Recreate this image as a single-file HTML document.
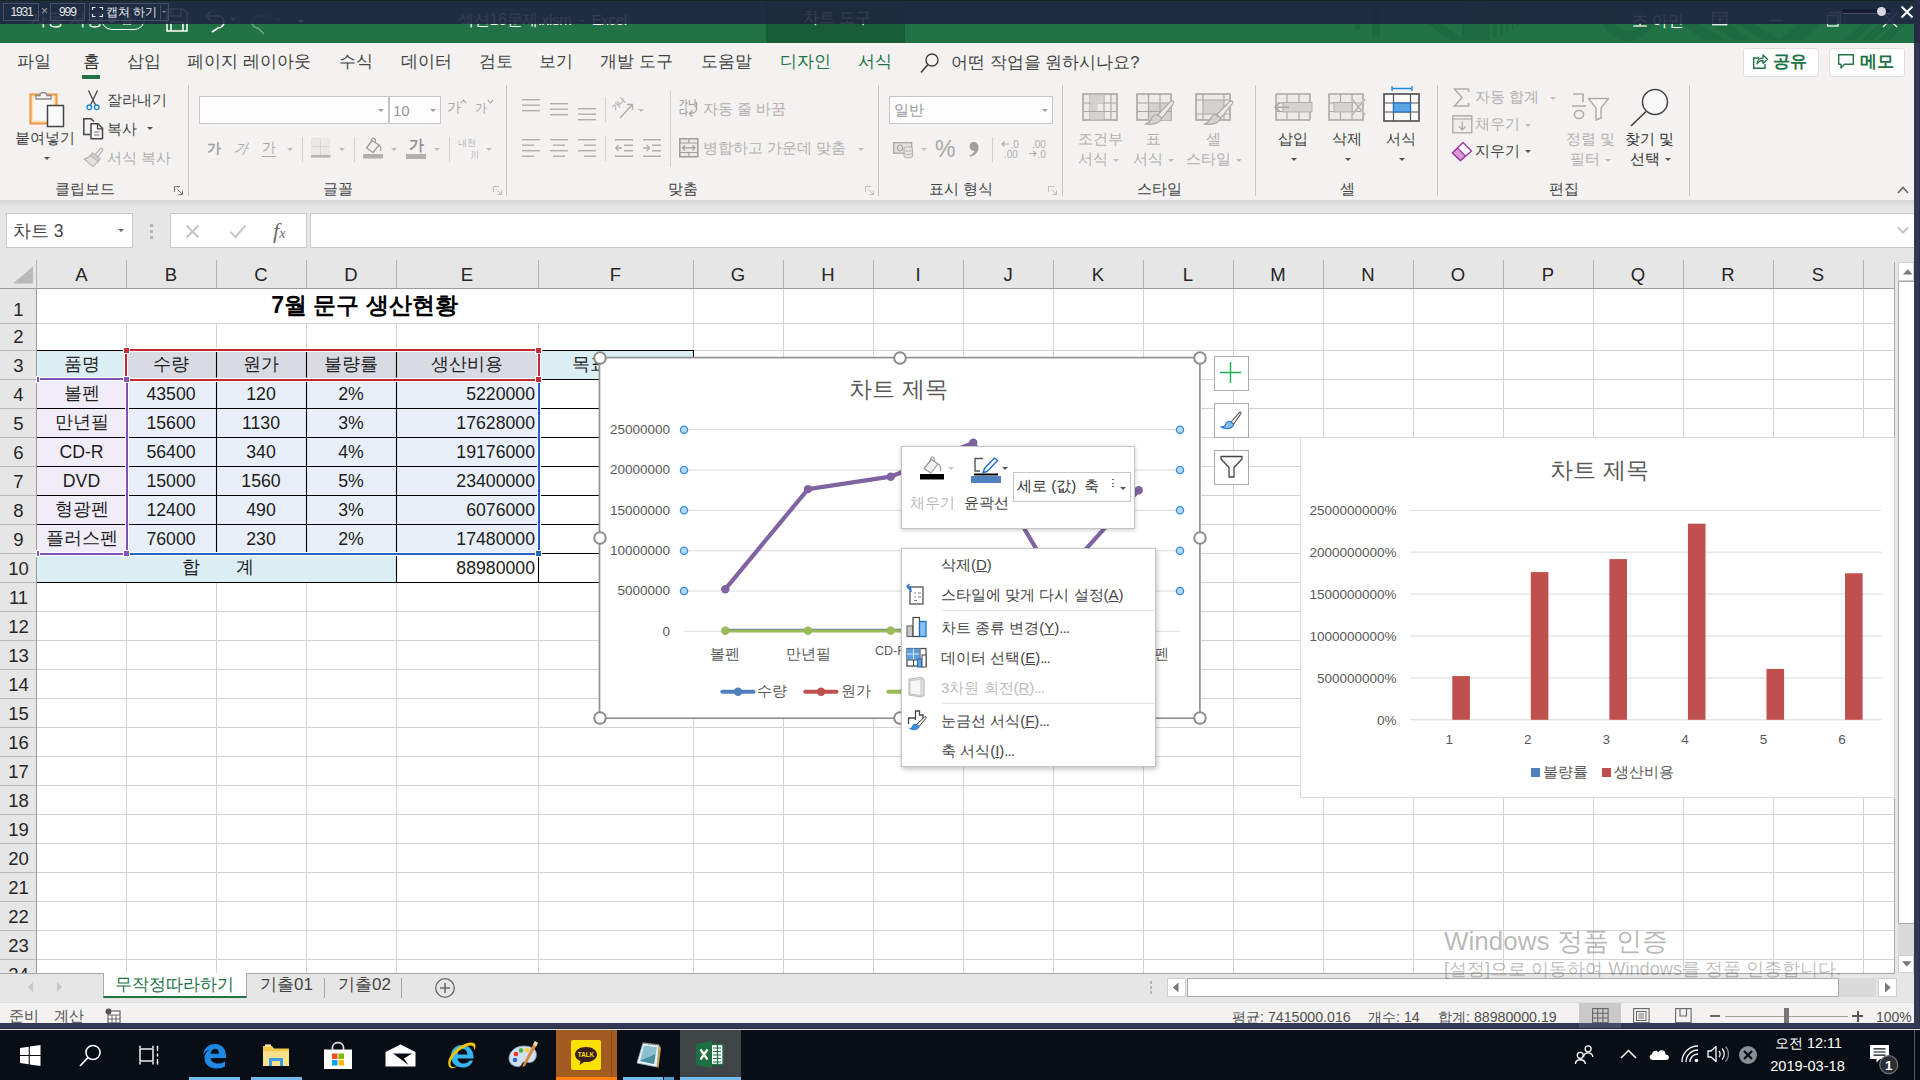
<!DOCTYPE html>
<html><head><meta charset="utf-8"><title>Excel</title>
<style>
html,body{margin:0;padding:0;overflow:hidden;}html{width:1920px;height:1080px;}
body{width:1920px;height:1080px;overflow:hidden;position:relative;background:#e6e6e6;font-family:"Liberation Sans",sans-serif;}
.b{position:absolute;box-sizing:border-box;}
.t{position:absolute;white-space:nowrap;font-family:"Liberation Sans",sans-serif;}
svg{position:absolute;overflow:visible;}
</style></head><body>

<div class="b" style="left:6px;top:213px;width:127px;height:35px;background:#fff;border:1px solid #c9c9c9;"></div>
<div class="t " style="left:13px;top:220.0px;font-size:17.5px;line-height:23px;color:#444;">차트 3</div>
<div class="b" style="left:117.5px;top:229.2px;width:0;height:0;border-left:3.5px solid transparent;border-right:3.5px solid transparent;border-top:3.5px solid #666;"></div>
<div class="b" style="left:150px;top:224px;width:3px;height:3px;background:#b5b5b5;"></div>
<div class="b" style="left:150px;top:230px;width:3px;height:3px;background:#b5b5b5;"></div>
<div class="b" style="left:150px;top:236px;width:3px;height:3px;background:#b5b5b5;"></div>
<div class="b" style="left:170px;top:213px;width:137px;height:35px;background:#fff;border:1px solid #c9c9c9;"></div>
<svg class="b" style="left:185px;top:224px;" width="15" height="15" viewBox="0 0 15 15"><path d="M1.5 1.5 L13.5 13.5 M13.5 1.5 L1.5 13.5" stroke="#c2c2c2" stroke-width="1.8"/></svg>
<svg class="b" style="left:229px;top:224px;" width="18" height="15" viewBox="0 0 18 15"><path d="M1.5 8 L6.5 13 L16.5 1.5" fill="none" stroke="#c8c8c8" stroke-width="2.2"/></svg>
<div class="t " style="left:273px;top:215.5px;font-size:22px;line-height:29px;color:#6a6a6a;font-family:'Liberation Serif',serif;"><i>f</i><span style="font-size:14px"><i>x</i></span></div>
<div class="b" style="left:310px;top:213px;width:1604px;height:35px;background:#fff;border:1px solid #c9c9c9;border-right:none;"></div>
<svg class="b" style="left:1897px;top:226px;" width="12" height="8" viewBox="0 0 12 8"><path d="M1 1.5 L6 6.5 L11 1.5" fill="none" stroke="#c4c4c4" stroke-width="2"/></svg>
<div class="b" style="left:0px;top:262px;width:1895px;height:27px;background:#e6e6e6;"></div>
<div class="b" style="left:0px;top:288px;width:1895px;height:1px;background:#9b9b9b;"></div>
<div class="b" style="left:0px;top:289px;width:37px;height:684px;background:#e6e6e6;"></div>
<div class="b" style="left:36px;top:289px;width:1px;height:684px;background:#9b9b9b;"></div>
<svg class="b" style="left:12px;top:266px;" width="22" height="18" viewBox="0 0 22 18"><polygon points="21,0.5 21,17.5 1,17.5" fill="#b9b9b9"/></svg>
<div class="b" style="left:36px;top:260px;width:1px;height:28px;background:#b3b3b3;"></div>
<div class="t " style="left:-68.5px;width:300px;text-align:center;top:263.0px;font-size:18.5px;line-height:24px;color:#262626;">A</div>
<div class="b" style="left:126px;top:260px;width:1px;height:28px;background:#b3b3b3;"></div>
<div class="t " style="left:21.0px;width:300px;text-align:center;top:263.0px;font-size:18.5px;line-height:24px;color:#262626;">B</div>
<div class="b" style="left:216px;top:260px;width:1px;height:28px;background:#b3b3b3;"></div>
<div class="t " style="left:111.0px;width:300px;text-align:center;top:263.0px;font-size:18.5px;line-height:24px;color:#262626;">C</div>
<div class="b" style="left:306px;top:260px;width:1px;height:28px;background:#b3b3b3;"></div>
<div class="t " style="left:201.0px;width:300px;text-align:center;top:263.0px;font-size:18.5px;line-height:24px;color:#262626;">D</div>
<div class="b" style="left:396px;top:260px;width:1px;height:28px;background:#b3b3b3;"></div>
<div class="t " style="left:317.0px;width:300px;text-align:center;top:263.0px;font-size:18.5px;line-height:24px;color:#262626;">E</div>
<div class="b" style="left:538px;top:260px;width:1px;height:28px;background:#b3b3b3;"></div>
<div class="t " style="left:465.5px;width:300px;text-align:center;top:263.0px;font-size:18.5px;line-height:24px;color:#262626;">F</div>
<div class="b" style="left:693px;top:260px;width:1px;height:28px;background:#b3b3b3;"></div>
<div class="t " style="left:588.0px;width:300px;text-align:center;top:263.0px;font-size:18.5px;line-height:24px;color:#262626;">G</div>
<div class="b" style="left:783px;top:260px;width:1px;height:28px;background:#b3b3b3;"></div>
<div class="t " style="left:678.0px;width:300px;text-align:center;top:263.0px;font-size:18.5px;line-height:24px;color:#262626;">H</div>
<div class="b" style="left:873px;top:260px;width:1px;height:28px;background:#b3b3b3;"></div>
<div class="t " style="left:768.0px;width:300px;text-align:center;top:263.0px;font-size:18.5px;line-height:24px;color:#262626;">I</div>
<div class="b" style="left:963px;top:260px;width:1px;height:28px;background:#b3b3b3;"></div>
<div class="t " style="left:858.0px;width:300px;text-align:center;top:263.0px;font-size:18.5px;line-height:24px;color:#262626;">J</div>
<div class="b" style="left:1053px;top:260px;width:1px;height:28px;background:#b3b3b3;"></div>
<div class="t " style="left:948.0px;width:300px;text-align:center;top:263.0px;font-size:18.5px;line-height:24px;color:#262626;">K</div>
<div class="b" style="left:1143px;top:260px;width:1px;height:28px;background:#b3b3b3;"></div>
<div class="t " style="left:1038.0px;width:300px;text-align:center;top:263.0px;font-size:18.5px;line-height:24px;color:#262626;">L</div>
<div class="b" style="left:1233px;top:260px;width:1px;height:28px;background:#b3b3b3;"></div>
<div class="t " style="left:1128.0px;width:300px;text-align:center;top:263.0px;font-size:18.5px;line-height:24px;color:#262626;">M</div>
<div class="b" style="left:1323px;top:260px;width:1px;height:28px;background:#b3b3b3;"></div>
<div class="t " style="left:1218.0px;width:300px;text-align:center;top:263.0px;font-size:18.5px;line-height:24px;color:#262626;">N</div>
<div class="b" style="left:1413px;top:260px;width:1px;height:28px;background:#b3b3b3;"></div>
<div class="t " style="left:1308.0px;width:300px;text-align:center;top:263.0px;font-size:18.5px;line-height:24px;color:#262626;">O</div>
<div class="b" style="left:1503px;top:260px;width:1px;height:28px;background:#b3b3b3;"></div>
<div class="t " style="left:1398.0px;width:300px;text-align:center;top:263.0px;font-size:18.5px;line-height:24px;color:#262626;">P</div>
<div class="b" style="left:1593px;top:260px;width:1px;height:28px;background:#b3b3b3;"></div>
<div class="t " style="left:1488.0px;width:300px;text-align:center;top:263.0px;font-size:18.5px;line-height:24px;color:#262626;">Q</div>
<div class="b" style="left:1683px;top:260px;width:1px;height:28px;background:#b3b3b3;"></div>
<div class="t " style="left:1578.0px;width:300px;text-align:center;top:263.0px;font-size:18.5px;line-height:24px;color:#262626;">R</div>
<div class="b" style="left:1773px;top:260px;width:1px;height:28px;background:#b3b3b3;"></div>
<div class="t " style="left:1668.0px;width:300px;text-align:center;top:263.0px;font-size:18.5px;line-height:24px;color:#262626;">S</div>
<div class="b" style="left:1863px;top:260px;width:1px;height:28px;background:#b3b3b3;"></div>
<div class="t " style="left:-131.5px;width:300px;text-align:center;top:297.5px;font-size:18.5px;line-height:24px;color:#262626;">1</div>
<div class="b" style="left:0px;top:323px;width:36px;height:1px;background:#b9b9b9;"></div>
<div class="t " style="left:-131.5px;width:300px;text-align:center;top:325.1px;font-size:18.5px;line-height:24px;color:#262626;">2</div>
<div class="b" style="left:0px;top:350px;width:36px;height:1px;background:#b9b9b9;"></div>
<div class="t " style="left:-131.5px;width:300px;text-align:center;top:354.1px;font-size:18.5px;line-height:24px;color:#262626;">3</div>
<div class="b" style="left:0px;top:379px;width:36px;height:1px;background:#b9b9b9;"></div>
<div class="t " style="left:-131.5px;width:300px;text-align:center;top:383.1px;font-size:18.5px;line-height:24px;color:#262626;">4</div>
<div class="b" style="left:0px;top:408px;width:36px;height:1px;background:#b9b9b9;"></div>
<div class="t " style="left:-131.5px;width:300px;text-align:center;top:412.1px;font-size:18.5px;line-height:24px;color:#262626;">5</div>
<div class="b" style="left:0px;top:437px;width:36px;height:1px;background:#b9b9b9;"></div>
<div class="t " style="left:-131.5px;width:300px;text-align:center;top:441.1px;font-size:18.5px;line-height:24px;color:#262626;">6</div>
<div class="b" style="left:0px;top:466px;width:36px;height:1px;background:#b9b9b9;"></div>
<div class="t " style="left:-131.5px;width:300px;text-align:center;top:470.1px;font-size:18.5px;line-height:24px;color:#262626;">7</div>
<div class="b" style="left:0px;top:495px;width:36px;height:1px;background:#b9b9b9;"></div>
<div class="t " style="left:-131.5px;width:300px;text-align:center;top:499.1px;font-size:18.5px;line-height:24px;color:#262626;">8</div>
<div class="b" style="left:0px;top:524px;width:36px;height:1px;background:#b9b9b9;"></div>
<div class="t " style="left:-131.5px;width:300px;text-align:center;top:528.1px;font-size:18.5px;line-height:24px;color:#262626;">9</div>
<div class="b" style="left:0px;top:553px;width:36px;height:1px;background:#b9b9b9;"></div>
<div class="t " style="left:-131.5px;width:300px;text-align:center;top:557.1px;font-size:18.5px;line-height:24px;color:#262626;">10</div>
<div class="b" style="left:0px;top:582px;width:36px;height:1px;background:#b9b9b9;"></div>
<div class="t " style="left:-131.5px;width:300px;text-align:center;top:586.1px;font-size:18.5px;line-height:24px;color:#262626;">11</div>
<div class="b" style="left:0px;top:611px;width:36px;height:1px;background:#b9b9b9;"></div>
<div class="t " style="left:-131.5px;width:300px;text-align:center;top:615.1px;font-size:18.5px;line-height:24px;color:#262626;">12</div>
<div class="b" style="left:0px;top:640px;width:36px;height:1px;background:#b9b9b9;"></div>
<div class="t " style="left:-131.5px;width:300px;text-align:center;top:644.1px;font-size:18.5px;line-height:24px;color:#262626;">13</div>
<div class="b" style="left:0px;top:669px;width:36px;height:1px;background:#b9b9b9;"></div>
<div class="t " style="left:-131.5px;width:300px;text-align:center;top:673.1px;font-size:18.5px;line-height:24px;color:#262626;">14</div>
<div class="b" style="left:0px;top:698px;width:36px;height:1px;background:#b9b9b9;"></div>
<div class="t " style="left:-131.5px;width:300px;text-align:center;top:702.1px;font-size:18.5px;line-height:24px;color:#262626;">15</div>
<div class="b" style="left:0px;top:727px;width:36px;height:1px;background:#b9b9b9;"></div>
<div class="t " style="left:-131.5px;width:300px;text-align:center;top:731.1px;font-size:18.5px;line-height:24px;color:#262626;">16</div>
<div class="b" style="left:0px;top:756px;width:36px;height:1px;background:#b9b9b9;"></div>
<div class="t " style="left:-131.5px;width:300px;text-align:center;top:760.1px;font-size:18.5px;line-height:24px;color:#262626;">17</div>
<div class="b" style="left:0px;top:785px;width:36px;height:1px;background:#b9b9b9;"></div>
<div class="t " style="left:-131.5px;width:300px;text-align:center;top:789.1px;font-size:18.5px;line-height:24px;color:#262626;">18</div>
<div class="b" style="left:0px;top:814px;width:36px;height:1px;background:#b9b9b9;"></div>
<div class="t " style="left:-131.5px;width:300px;text-align:center;top:818.1px;font-size:18.5px;line-height:24px;color:#262626;">19</div>
<div class="b" style="left:0px;top:843px;width:36px;height:1px;background:#b9b9b9;"></div>
<div class="t " style="left:-131.5px;width:300px;text-align:center;top:847.1px;font-size:18.5px;line-height:24px;color:#262626;">20</div>
<div class="b" style="left:0px;top:872px;width:36px;height:1px;background:#b9b9b9;"></div>
<div class="t " style="left:-131.5px;width:300px;text-align:center;top:876.1px;font-size:18.5px;line-height:24px;color:#262626;">21</div>
<div class="b" style="left:0px;top:901px;width:36px;height:1px;background:#b9b9b9;"></div>
<div class="t " style="left:-131.5px;width:300px;text-align:center;top:905.1px;font-size:18.5px;line-height:24px;color:#262626;">22</div>
<div class="b" style="left:0px;top:930px;width:36px;height:1px;background:#b9b9b9;"></div>
<div class="t " style="left:-131.5px;width:300px;text-align:center;top:934.1px;font-size:18.5px;line-height:24px;color:#262626;">23</div>
<div class="b" style="left:0px;top:959px;width:36px;height:1px;background:#b9b9b9;"></div>
<div class="t " style="left:-131.5px;width:300px;text-align:center;top:963.1px;font-size:18.5px;line-height:24px;color:#262626;">24</div>
<div class="b" style="left:37px;top:289px;width:1858px;height:684px;background:#fff;"></div>
<svg class="b" style="left:0px;top:0px;" width="1920" height="1080" viewBox="0 0 1920 1080"><path d="M126.5 324 V973 M216.5 324 V973 M306.5 324 V973 M396.5 324 V973 M538.5 324 V973 M693.5 289 V973 M783.5 289 V973 M873.5 289 V973 M963.5 289 V973 M1053.5 289 V973 M1143.5 289 V973 M1233.5 289 V973 M1323.5 289 V973 M1413.5 289 V973 M1503.5 289 V973 M1593.5 289 V973 M1683.5 289 V973 M1773.5 289 V973 M1863.5 289 V973 M37 323.5 H1895 M37 350.5 H1895 M37 379.5 H1895 M37 408.5 H1895 M37 437.5 H1895 M37 466.5 H1895 M37 495.5 H1895 M37 524.5 H1895 M37 553.5 H1895 M37 582.5 H1895 M37 611.5 H1895 M37 640.5 H1895 M37 669.5 H1895 M37 698.5 H1895 M37 727.5 H1895 M37 756.5 H1895 M37 785.5 H1895 M37 814.5 H1895 M37 843.5 H1895 M37 872.5 H1895 M37 901.5 H1895 M37 930.5 H1895 M37 959.5 H1895 M37 988.5 H1895" stroke="#d4d4d4" stroke-width="1" fill="none"/></svg>
<div class="b" style="left:1894px;top:262px;width:1px;height:711px;background:#ababab;"></div>
<div class="b" style="left:37px;top:351px;width:89px;height:28px;background:#daeef3;"></div>
<div class="b" style="left:127px;top:351px;width:411px;height:28px;background:#d8dbe2;"></div>
<div class="b" style="left:539px;top:351px;width:154px;height:28px;background:#daeef3;"></div>
<div class="b" style="left:37px;top:380px;width:89px;height:173px;background:#f1edf8;"></div>
<div class="b" style="left:127px;top:380px;width:411px;height:173px;background:#e9eff9;"></div>
<div class="b" style="left:37px;top:554px;width:359px;height:28px;background:#daeef3;"></div>
<svg class="b" style="left:0px;top:0px;" width="1920" height="1080" viewBox="0 0 1920 1080"><path d="M37 350.5 H126 M538 350.5 H693 M37 379.5 H693 M37 408.5 H693 M37 437.5 H693 M37 466.5 H693 M37 495.5 H693 M37 524.5 H693 M396 553.5 H693 M37 582.5 H693 M216.5 352 V377.5 M216.5 381 V553 M306.5 352 V377.5 M306.5 381 V553 M396.5 352 V377.5 M396.5 381 V553 M396.5 553 V582 M538.5 553 V582 M693.5 350 V582" stroke="#000" stroke-width="1.1" fill="none"/></svg>
<div class="t " style="left:214.5px;width:300px;text-align:center;top:290.0px;font-size:23px;line-height:30px;color:#000;font-weight:bold;">7월 문구 생산현황</div>
<div class="t " style="left:-68.5px;width:300px;text-align:center;top:352.8px;font-size:17.5px;line-height:23px;color:#222;">품명</div>
<div class="t " style="left:21px;width:300px;text-align:center;top:352.8px;font-size:17.5px;line-height:23px;color:#222;">수량</div>
<div class="t " style="left:111px;width:300px;text-align:center;top:352.8px;font-size:17.5px;line-height:23px;color:#222;">원가</div>
<div class="t " style="left:201px;width:300px;text-align:center;top:352.8px;font-size:17.5px;line-height:23px;color:#222;">불량률</div>
<div class="t " style="left:317px;width:300px;text-align:center;top:352.8px;font-size:17.5px;line-height:23px;color:#222;">생산비용</div>
<div class="t " style="left:571.7px;top:352.8px;font-size:17.5px;line-height:23px;color:#222;">목표</div>
<div class="t " style="left:-68.5px;width:300px;text-align:center;top:381.8px;font-size:17.5px;line-height:23px;color:#1c1c1c;">볼펜</div>
<div class="t " style="left:21px;width:300px;text-align:center;top:383.3px;font-size:17.7px;line-height:23px;color:#1c1c1c;">43500</div>
<div class="t " style="left:111px;width:300px;text-align:center;top:383.3px;font-size:17.7px;line-height:23px;color:#1c1c1c;">120</div>
<div class="t " style="left:201px;width:300px;text-align:center;top:383.3px;font-size:17.7px;line-height:23px;color:#1c1c1c;">2%</div>
<div class="t " style="left:235px;width:300px;text-align:right;top:383.3px;font-size:17.7px;line-height:23px;color:#1c1c1c;">5220000</div>
<div class="t " style="left:-68.5px;width:300px;text-align:center;top:410.8px;font-size:17.5px;line-height:23px;color:#1c1c1c;">만년필</div>
<div class="t " style="left:21px;width:300px;text-align:center;top:412.3px;font-size:17.7px;line-height:23px;color:#1c1c1c;">15600</div>
<div class="t " style="left:111px;width:300px;text-align:center;top:412.3px;font-size:17.7px;line-height:23px;color:#1c1c1c;">1130</div>
<div class="t " style="left:201px;width:300px;text-align:center;top:412.3px;font-size:17.7px;line-height:23px;color:#1c1c1c;">3%</div>
<div class="t " style="left:235px;width:300px;text-align:right;top:412.3px;font-size:17.7px;line-height:23px;color:#1c1c1c;">17628000</div>
<div class="t " style="left:-68.5px;width:300px;text-align:center;top:441.3px;font-size:17.7px;line-height:23px;color:#1c1c1c;">CD-R</div>
<div class="t " style="left:21px;width:300px;text-align:center;top:441.3px;font-size:17.7px;line-height:23px;color:#1c1c1c;">56400</div>
<div class="t " style="left:111px;width:300px;text-align:center;top:441.3px;font-size:17.7px;line-height:23px;color:#1c1c1c;">340</div>
<div class="t " style="left:201px;width:300px;text-align:center;top:441.3px;font-size:17.7px;line-height:23px;color:#1c1c1c;">4%</div>
<div class="t " style="left:235px;width:300px;text-align:right;top:441.3px;font-size:17.7px;line-height:23px;color:#1c1c1c;">19176000</div>
<div class="t " style="left:-68.5px;width:300px;text-align:center;top:470.3px;font-size:17.7px;line-height:23px;color:#1c1c1c;">DVD</div>
<div class="t " style="left:21px;width:300px;text-align:center;top:470.3px;font-size:17.7px;line-height:23px;color:#1c1c1c;">15000</div>
<div class="t " style="left:111px;width:300px;text-align:center;top:470.3px;font-size:17.7px;line-height:23px;color:#1c1c1c;">1560</div>
<div class="t " style="left:201px;width:300px;text-align:center;top:470.3px;font-size:17.7px;line-height:23px;color:#1c1c1c;">5%</div>
<div class="t " style="left:235px;width:300px;text-align:right;top:470.3px;font-size:17.7px;line-height:23px;color:#1c1c1c;">23400000</div>
<div class="t " style="left:-68.5px;width:300px;text-align:center;top:497.8px;font-size:17.5px;line-height:23px;color:#1c1c1c;">형광펜</div>
<div class="t " style="left:21px;width:300px;text-align:center;top:499.3px;font-size:17.7px;line-height:23px;color:#1c1c1c;">12400</div>
<div class="t " style="left:111px;width:300px;text-align:center;top:499.3px;font-size:17.7px;line-height:23px;color:#1c1c1c;">490</div>
<div class="t " style="left:201px;width:300px;text-align:center;top:499.3px;font-size:17.7px;line-height:23px;color:#1c1c1c;">3%</div>
<div class="t " style="left:235px;width:300px;text-align:right;top:499.3px;font-size:17.7px;line-height:23px;color:#1c1c1c;">6076000</div>
<div class="t " style="left:-68.5px;width:300px;text-align:center;top:526.8px;font-size:17.5px;line-height:23px;color:#1c1c1c;">플러스펜</div>
<div class="t " style="left:21px;width:300px;text-align:center;top:528.3px;font-size:17.7px;line-height:23px;color:#1c1c1c;">76000</div>
<div class="t " style="left:111px;width:300px;text-align:center;top:528.3px;font-size:17.7px;line-height:23px;color:#1c1c1c;">230</div>
<div class="t " style="left:201px;width:300px;text-align:center;top:528.3px;font-size:17.7px;line-height:23px;color:#1c1c1c;">2%</div>
<div class="t " style="left:235px;width:300px;text-align:right;top:528.3px;font-size:17.7px;line-height:23px;color:#1c1c1c;">17480000</div>
<div class="t " style="left:182px;top:555.5px;font-size:18px;line-height:23px;color:#1c1c1c;">합</div>
<div class="t " style="left:236px;top:555.5px;font-size:18px;line-height:23px;color:#1c1c1c;">계</div>
<div class="t " style="left:235px;width:300px;text-align:right;top:557.3px;font-size:17.7px;line-height:23px;color:#1c1c1c;">88980000</div>
<div class="b" style="left:537px;top:382px;width:4px;height:169.5px;background:#fff;"></div>
<div class="b" style="left:128.5px;top:552px;width:407.5px;height:4px;background:#fff;"></div>
<div class="b" style="left:38.5px;top:377px;width:86px;height:4px;background:#fff;"></div>
<div class="b" style="left:38.5px;top:552px;width:86px;height:4px;background:#fff;"></div>
<div class="b" style="left:125px;top:381.5px;width:4px;height:170px;background:#fff;"></div>
<div class="b" style="left:128px;top:348px;width:408px;height:4px;background:#fff;"></div>
<div class="b" style="left:128.5px;top:378px;width:407.5px;height:4px;background:#fff;"></div>
<div class="b" style="left:124px;top:352.5px;width:4px;height:25.5px;background:#fff;"></div>
<div class="b" style="left:537px;top:353px;width:4px;height:24px;background:#fff;"></div>
<div class="b" style="left:538px;top:383px;width:2px;height:167.5px;background:#2a60c6;"></div>
<div class="b" style="left:129.5px;top:553px;width:405.5px;height:2px;background:#2a60c6;"></div>
<div class="b" style="left:39.5px;top:378px;width:84px;height:2px;background:#8250bc;"></div>
<div class="b" style="left:39.5px;top:553px;width:84px;height:2px;background:#8250bc;"></div>
<div class="b" style="left:126px;top:382.5px;width:2px;height:168px;background:#8250bc;"></div>
<div class="b" style="left:129px;top:349px;width:406px;height:2px;background:#c42832;"></div>
<div class="b" style="left:129.5px;top:379px;width:405.5px;height:2px;background:#c42832;"></div>
<div class="b" style="left:125px;top:353.5px;width:2px;height:23.5px;background:#c42832;"></div>
<div class="b" style="left:538px;top:354px;width:2px;height:22px;background:#c42832;"></div>
<div class="b" style="left:122.9px;top:347.0px;width:7px;height:7px;background:#fff;"></div>
<div class="b" style="left:535.0px;top:347.0px;width:7px;height:7px;background:#fff;"></div>
<div class="b" style="left:535.0px;top:376.1px;width:7px;height:7px;background:#fff;"></div>
<div class="b" style="left:122.9px;top:376.0px;width:7px;height:7px;background:#fff;"></div>
<div class="b" style="left:122.9px;top:549.9px;width:7px;height:7px;background:#fff;"></div>
<div class="b" style="left:535.0px;top:549.9px;width:7px;height:7px;background:#fff;"></div>
<div class="b" style="left:36px;top:376.0px;width:4px;height:6.6px;background:#fff;"></div>
<div class="b" style="left:36px;top:550.4000000000001px;width:4px;height:6.6px;background:#fff;"></div>
<div class="b" style="left:123.9px;top:348.0px;width:5px;height:5px;background:#c2303c;"></div>
<div class="b" style="left:536.0px;top:348.0px;width:5px;height:5px;background:#c2303c;"></div>
<div class="b" style="left:536.0px;top:377.1px;width:5px;height:5px;background:#c2303c;"></div>
<div class="b" style="left:123.9px;top:377.0px;width:5px;height:5px;background:#8558b8;"></div>
<div class="b" style="left:123.9px;top:550.9px;width:5px;height:5px;background:#8558b8;"></div>
<div class="b" style="left:536.0px;top:550.9px;width:5px;height:5px;background:#2c62c6;"></div>
<div class="b" style="left:37px;top:377.0px;width:2px;height:4.6px;background:#8558b8;"></div>
<div class="b" style="left:37px;top:551.4000000000001px;width:2px;height:4.6px;background:#8558b8;"></div>
<div class="b" style="left:1300px;top:437px;width:595px;height:361px;background:#fff;border:1px solid #d9d9d9;"></div>
<div class="t " style="left:1449.5px;width:300px;text-align:center;top:456.0px;font-size:22.5px;line-height:29px;color:#595959;">차트 제목</div>
<svg class="b" style="left:0px;top:0px;" width="1920" height="1080" viewBox="0 0 1920 1080"><path d="M1410 510.3 H1881.5" stroke="#d9d9d9" stroke-width="1"/><path d="M1410 552.2 H1881.5" stroke="#d9d9d9" stroke-width="1"/><path d="M1410 594.1 H1881.5" stroke="#d9d9d9" stroke-width="1"/><path d="M1410 636.0 H1881.5" stroke="#d9d9d9" stroke-width="1"/><path d="M1410 677.9 H1881.5" stroke="#d9d9d9" stroke-width="1"/><path d="M1410 719.8 H1881.5" stroke="#d9d9d9" stroke-width="1"/><rect x="1452.3" y="676.1" width="17.6" height="43.7" fill="#c0504d"/><rect x="1530.8" y="572.1" width="17.6" height="147.7" fill="#c0504d"/><rect x="1609.4" y="559.1" width="17.6" height="160.7" fill="#c0504d"/><rect x="1687.9" y="523.7" width="17.6" height="196.1" fill="#c0504d"/><rect x="1766.5" y="668.9" width="17.6" height="50.9" fill="#c0504d"/><rect x="1845.0" y="573.3" width="17.6" height="146.5" fill="#c0504d"/></svg>
<div class="t " style="left:1096.5px;width:300px;text-align:right;top:502.0px;font-size:13.5px;line-height:18px;color:#595959;">2500000000%</div>
<div class="t " style="left:1096.5px;width:300px;text-align:right;top:543.9px;font-size:13.5px;line-height:18px;color:#595959;">2000000000%</div>
<div class="t " style="left:1096.5px;width:300px;text-align:right;top:585.8px;font-size:13.5px;line-height:18px;color:#595959;">1500000000%</div>
<div class="t " style="left:1096.5px;width:300px;text-align:right;top:627.7px;font-size:13.5px;line-height:18px;color:#595959;">1000000000%</div>
<div class="t " style="left:1096.5px;width:300px;text-align:right;top:669.6px;font-size:13.5px;line-height:18px;color:#595959;">500000000%</div>
<div class="t " style="left:1096.5px;width:300px;text-align:right;top:711.5px;font-size:13.5px;line-height:18px;color:#595959;">0%</div>
<div class="t " style="left:1299.275px;width:300px;text-align:center;top:730.5px;font-size:13.5px;line-height:18px;color:#595959;">1</div>
<div class="t " style="left:1377.825px;width:300px;text-align:center;top:730.5px;font-size:13.5px;line-height:18px;color:#595959;">2</div>
<div class="t " style="left:1456.375px;width:300px;text-align:center;top:730.5px;font-size:13.5px;line-height:18px;color:#595959;">3</div>
<div class="t " style="left:1534.925px;width:300px;text-align:center;top:730.5px;font-size:13.5px;line-height:18px;color:#595959;">4</div>
<div class="t " style="left:1613.475px;width:300px;text-align:center;top:730.5px;font-size:13.5px;line-height:18px;color:#595959;">5</div>
<div class="t " style="left:1692.025px;width:300px;text-align:center;top:730.5px;font-size:13.5px;line-height:18px;color:#595959;">6</div>
<div class="b" style="left:1531px;top:767.5px;width:9px;height:9px;background:#4f81bd;"></div>
<div class="t " style="left:1543px;top:762.5px;font-size:14.5px;line-height:19px;color:#595959;">불량률</div>
<div class="b" style="left:1602px;top:767.5px;width:9px;height:9px;background:#c0504d;"></div>
<div class="t " style="left:1614px;top:762.5px;font-size:14.5px;line-height:19px;color:#595959;">생산비용</div>
<div class="b" style="left:599px;top:357px;width:601.5px;height:361.5px;background:#fff;"></div>
<svg class="b" style="left:0px;top:0px;" width="1920" height="1080" viewBox="0 0 1920 1080"><rect x="599.5" y="357.6" width="600.4" height="360.6" fill="none" stroke="#929292" stroke-width="1.7"/></svg>
<div class="t " style="left:748.5px;width:300px;text-align:center;top:374.5px;font-size:22.5px;line-height:29px;color:#595959;">차트 제목</div>
<svg class="b" style="left:0px;top:0px;" width="1920" height="1080" viewBox="0 0 1920 1080"><path d="M684 631.3 H1180" stroke="#d9d9d9" stroke-width="1"/><path d="M684 591.0 H1180" stroke="#d9d9d9" stroke-width="1"/><path d="M684 550.7 H1180" stroke="#d9d9d9" stroke-width="1"/><path d="M684 510.3 H1180" stroke="#d9d9d9" stroke-width="1"/><path d="M684 470.0 H1180" stroke="#d9d9d9" stroke-width="1"/><path d="M684 429.7 H1180" stroke="#d9d9d9" stroke-width="1"/><polyline points="725.3,630.2 808.0,630.2 890.7,630.2 973.3,630.2 1056.0,630.2 1138.7,630.2" fill="none" stroke="#4f81bd" stroke-width="3.1" stroke-linejoin="round" stroke-linecap="round"/><circle cx="725.3" cy="630.2" r="3.5" fill="#4f81bd"/><circle cx="808.0" cy="630.2" r="3.5" fill="#4f81bd"/><circle cx="890.7" cy="630.2" r="3.5" fill="#4f81bd"/><circle cx="973.3" cy="630.2" r="3.5" fill="#4f81bd"/><circle cx="1056.0" cy="630.2" r="3.5" fill="#4f81bd"/><circle cx="1138.7" cy="630.2" r="3.5" fill="#4f81bd"/><polyline points="725.3,630.8 808.0,630.8 890.7,630.8 973.3,630.8 1056.0,630.8 1138.7,630.8" fill="none" stroke="#c0504d" stroke-width="2.0" stroke-linejoin="round" stroke-linecap="round"/><circle cx="725.3" cy="630.8" r="3.0" fill="#c0504d"/><circle cx="808.0" cy="630.8" r="3.0" fill="#c0504d"/><circle cx="890.7" cy="630.8" r="3.0" fill="#c0504d"/><circle cx="973.3" cy="630.8" r="3.0" fill="#c0504d"/><circle cx="1056.0" cy="630.8" r="3.0" fill="#c0504d"/><circle cx="1138.7" cy="630.8" r="3.0" fill="#c0504d"/><polyline points="725.3,631.0 808.0,631.0 890.7,631.0 973.3,631.0 1056.0,631.0 1138.7,631.0" fill="none" stroke="#9bbb59" stroke-width="3.1" stroke-linejoin="round" stroke-linecap="round"/><circle cx="725.3" cy="630.8" r="4.2" fill="#9bbb59"/><circle cx="808.0" cy="630.8" r="4.2" fill="#9bbb59"/><circle cx="890.7" cy="630.8" r="4.2" fill="#9bbb59"/><circle cx="973.3" cy="630.8" r="4.2" fill="#9bbb59"/><circle cx="1056.0" cy="630.8" r="4.2" fill="#9bbb59"/><circle cx="1138.7" cy="630.8" r="4.2" fill="#9bbb59"/><polyline points="725.3,589.2 808.0,489.1 890.7,476.7 973.3,442.6 1056.0,582.3 1138.7,490.3" fill="none" stroke="#8064a2" stroke-width="4.2" stroke-linejoin="round" stroke-linecap="round"/><circle cx="725.3" cy="589.2" r="4.2" fill="#8064a2"/><circle cx="808.0" cy="489.1" r="4.2" fill="#8064a2"/><circle cx="890.7" cy="476.7" r="4.2" fill="#8064a2"/><circle cx="973.3" cy="442.6" r="4.2" fill="#8064a2"/><circle cx="1056.0" cy="582.3" r="4.2" fill="#8064a2"/><circle cx="1138.7" cy="490.3" r="4.2" fill="#8064a2"/><circle cx="684" cy="591.0" r="3.6" fill="#b7d6f1" stroke="#2e8fe3" stroke-width="1.3"/><circle cx="1180" cy="591.0" r="3.6" fill="#b7d6f1" stroke="#2e8fe3" stroke-width="1.3"/><circle cx="684" cy="550.7" r="3.6" fill="#b7d6f1" stroke="#2e8fe3" stroke-width="1.3"/><circle cx="1180" cy="550.7" r="3.6" fill="#b7d6f1" stroke="#2e8fe3" stroke-width="1.3"/><circle cx="684" cy="510.3" r="3.6" fill="#b7d6f1" stroke="#2e8fe3" stroke-width="1.3"/><circle cx="1180" cy="510.3" r="3.6" fill="#b7d6f1" stroke="#2e8fe3" stroke-width="1.3"/><circle cx="684" cy="470.0" r="3.6" fill="#b7d6f1" stroke="#2e8fe3" stroke-width="1.3"/><circle cx="1180" cy="470.0" r="3.6" fill="#b7d6f1" stroke="#2e8fe3" stroke-width="1.3"/><circle cx="684" cy="429.7" r="3.6" fill="#b7d6f1" stroke="#2e8fe3" stroke-width="1.3"/><circle cx="1180" cy="429.7" r="3.6" fill="#b7d6f1" stroke="#2e8fe3" stroke-width="1.3"/><path d="M722.3 691.7 H753.5" stroke="#4f81bd" stroke-width="4" stroke-linecap="round"/><circle cx="738" cy="691.7" r="4.2" fill="#4f81bd"/><path d="M805.3 691.7 H836.5" stroke="#c0504d" stroke-width="4" stroke-linecap="round"/><circle cx="821" cy="691.7" r="4.2" fill="#c0504d"/><path d="M888.3 691.7 H919.5" stroke="#9bbb59" stroke-width="4" stroke-linecap="round"/><circle cx="904" cy="691.7" r="4.2" fill="#9bbb59"/><path d="M985.3 691.7 H1016.5" stroke="#8064a2" stroke-width="4" stroke-linecap="round"/><circle cx="1001" cy="691.7" r="4.2" fill="#8064a2"/></svg>
<div class="t " style="left:370px;width:300px;text-align:right;top:622.6px;font-size:13.5px;line-height:18px;color:#595959;">0</div>
<div class="t " style="left:370px;width:300px;text-align:right;top:582.3px;font-size:13.5px;line-height:18px;color:#595959;">5000000</div>
<div class="t " style="left:370px;width:300px;text-align:right;top:542.0px;font-size:13.5px;line-height:18px;color:#595959;">10000000</div>
<div class="t " style="left:370px;width:300px;text-align:right;top:501.6px;font-size:13.5px;line-height:18px;color:#595959;">15000000</div>
<div class="t " style="left:370px;width:300px;text-align:right;top:461.3px;font-size:13.5px;line-height:18px;color:#595959;">20000000</div>
<div class="t " style="left:370px;width:300px;text-align:right;top:421.0px;font-size:13.5px;line-height:18px;color:#595959;">25000000</div>
<div class="t " style="left:575.335px;width:300px;text-align:center;top:644.7px;font-size:14.5px;line-height:19px;color:#595959;">볼펜</div>
<div class="t " style="left:658.005px;width:300px;text-align:center;top:644.7px;font-size:14.5px;line-height:19px;color:#595959;">만년필</div>
<div class="t " style="left:740.675px;width:300px;text-align:center;top:643.2px;font-size:12.5px;line-height:16px;color:#595959;">CD-R</div>
<div class="t " style="left:823.345px;width:300px;text-align:center;top:643.2px;font-size:12.5px;line-height:16px;color:#595959;">DVD</div>
<div class="t " style="left:906.0149999999999px;width:300px;text-align:center;top:644.7px;font-size:14.5px;line-height:19px;color:#595959;">형광펜</div>
<div class="t " style="left:988.685px;width:300px;text-align:center;top:644.7px;font-size:14.5px;line-height:19px;color:#595959;">플러스펜</div>
<div class="t " style="left:757px;top:681.5px;font-size:14.5px;line-height:19px;color:#595959;">수량</div>
<div class="t " style="left:841px;top:681.5px;font-size:14.5px;line-height:19px;color:#595959;">원가</div>
<div class="t " style="left:923px;top:681.5px;font-size:14.5px;line-height:19px;color:#595959;">불량률</div>
<div class="t " style="left:1020px;top:681.5px;font-size:14.5px;line-height:19px;color:#595959;">생산비용</div>
<svg class="b" style="left:0px;top:0px;" width="1920" height="1080" viewBox="0 0 1920 1080"><circle cx="600" cy="358" r="5.8" fill="#fff" stroke="#8c8c8c" stroke-width="2"/><circle cx="900" cy="358" r="5.8" fill="#fff" stroke="#8c8c8c" stroke-width="2"/><circle cx="1200" cy="358" r="5.8" fill="#fff" stroke="#8c8c8c" stroke-width="2"/><circle cx="600" cy="538" r="5.8" fill="#fff" stroke="#8c8c8c" stroke-width="2"/><circle cx="1200" cy="538" r="5.8" fill="#fff" stroke="#8c8c8c" stroke-width="2"/><circle cx="600" cy="718" r="5.8" fill="#fff" stroke="#8c8c8c" stroke-width="2"/><circle cx="900" cy="718" r="5.8" fill="#fff" stroke="#8c8c8c" stroke-width="2"/><circle cx="1200" cy="718" r="5.8" fill="#fff" stroke="#8c8c8c" stroke-width="2"/></svg>
<div class="b" style="left:1214px;top:356px;width:35px;height:35px;background:#fff;border:1px solid #ababab;"></div>
<div class="b" style="left:1214px;top:403px;width:35px;height:35px;background:#fff;border:1px solid #ababab;"></div>
<div class="b" style="left:1214px;top:450px;width:35px;height:35px;background:#fff;border:1px solid #ababab;"></div>
<svg class="b" style="left:1214px;top:356px;" width="35" height="35" viewBox="0 0 35 35"><path d="M6 16.5 H27 M16.5 6 V27" stroke="#1aad54" stroke-width="1.4"/></svg>
<svg class="b" style="left:1214px;top:403px;" width="35" height="35" viewBox="0 0 35 35"><path d="M17 19 L25.5 9.5 C26.5 8.5 27.5 9.5 26.8 10.7 L19.5 21.5 Z" fill="#f4f4f4" stroke="#555" stroke-width="1.1"/><path d="M17 19 C14.5 17.5 12 19 11.5 21.5 C11 23.5 8.5 24 6.5 23.5 C10 26.5 15.5 26.5 18.5 23.5 C19.8 22.2 19.8 21 19.5 21.5 Z" fill="#8cbdee" stroke="#2b7cd3" stroke-width="1.1"/></svg>
<svg class="b" style="left:1214px;top:450px;" width="35" height="35" viewBox="0 0 35 35"><path d="M7 6.5 H28 V9 L20 17.5 V27 H15 V17.5 L7 9 Z" fill="#f8f8f8" stroke="#444" stroke-width="1.3" stroke-linejoin="round"/></svg>
<div class="b" style="left:901px;top:446px;width:234px;height:83px;background:#fff;border:1px solid #c6c6c6;box-shadow:0 1px 4px rgba(0,0,0,0.22);"></div>
<svg class="b" style="left:920px;top:455px;" width="36" height="27" viewBox="0 0 36 27"><path d="M11.5 4.5 L4 13.5 L11 18 L18 9 Z" fill="#f2f2f2" stroke="#9a9a9a" stroke-width="1.2" stroke-linejoin="round"/><path d="M10.5 7 C9.5 0 15 0 14.5 7" fill="none" stroke="#9a9a9a" stroke-width="1.2"/><path d="M18 9 C20.5 10 21 13 20.5 16" fill="none" stroke="#9a9a9a" stroke-width="1.3"/><rect x="0" y="19" width="24" height="5.5" fill="#000"/></svg>
<div class="b" style="left:948px;top:466.5px;width:0;height:0;border-left:3px solid transparent;border-right:3px solid transparent;border-top:3px solid #c4c4c4;"></div>
<svg class="b" style="left:971px;top:456px;" width="36" height="28" viewBox="0 0 36 28"><path d="M12 2.5 H4 V15 H9" fill="none" stroke="#555" stroke-width="1.4"/><path d="M23.5 2 L26.5 4.5 L16 15.5 L12 16.5 L13.5 12.5 Z" fill="#fff" stroke="#1f6fc4" stroke-width="1.4" stroke-linejoin="round"/><rect x="3" y="17.5" width="24" height="2" fill="#000"/><rect x="0" y="20" width="30" height="7" fill="#4f81bd"/></svg>
<div class="b" style="left:1002px;top:466.5px;width:0;height:0;border-left:3px solid transparent;border-right:3px solid transparent;border-top:3px solid #555;"></div>
<div class="t " style="left:910px;top:493.5px;font-size:14.5px;line-height:19px;color:#b9b9b9;">채우기</div>
<div class="t " style="left:964px;top:493.5px;font-size:14.5px;line-height:19px;color:#444;">윤곽선</div>
<div class="b" style="left:1013px;top:472px;width:118px;height:30px;background:#fff;border:1px solid #c6c6c6;"></div>
<div class="t " style="left:1017px;top:475.5px;font-size:15px;line-height:20px;color:#333;">세로 (값)&nbsp; 축</div>
<div class="b" style="left:1112px;top:479px;width:2px;height:1.3px;background:#666;"></div>
<div class="b" style="left:1112px;top:482.5px;width:2px;height:1.3px;background:#666;"></div>
<div class="b" style="left:1112px;top:486px;width:2px;height:1.3px;background:#666;"></div>
<div class="b" style="left:1119.5px;top:486.5px;width:0;height:0;border-left:3px solid transparent;border-right:3px solid transparent;border-top:3px solid #555;"></div>
<div class="b" style="left:901px;top:548px;width:255px;height:219px;background:#fff;border:1px solid #c6c6c6;box-shadow:1px 2px 5px rgba(0,0,0,0.25);"></div>
<div class="b" style="left:942px;top:610px;width:212px;height:1px;background:#e1e4ea;"></div>
<div class="b" style="left:942px;top:703px;width:212px;height:1px;background:#e1e4ea;"></div>
<div class="t " style="left:941px;top:555.0px;font-size:15px;line-height:20px;color:#444;">삭제(<u>D</u>)</div>
<div class="t " style="left:941px;top:585.0px;font-size:15px;line-height:20px;color:#444;">스타일에 맞게 다시 설정(<u>A</u>)</div>
<div class="t " style="left:941px;top:617.5px;font-size:15px;line-height:20px;color:#444;">차트 종류 변경(<u>Y</u>)<span style="letter-spacing:-1px">...</span></div>
<div class="t " style="left:941px;top:648.0px;font-size:15px;line-height:20px;color:#444;">데이터 선택(<u>E</u>)<span style="letter-spacing:-1px">...</span></div>
<div class="t " style="left:941px;top:678.0px;font-size:15px;line-height:20px;color:#bdbdbd;">3차원 회전(<u>R</u>)<span style="letter-spacing:-1px">...</span></div>
<div class="t " style="left:941px;top:711.0px;font-size:15px;line-height:20px;color:#444;">눈금선 서식(<u>F</u>)<span style="letter-spacing:-1px">...</span></div>
<div class="t " style="left:941px;top:741.0px;font-size:15px;line-height:20px;color:#444;">축 서식(<u>I</u>)<span style="letter-spacing:-1px">...</span></div>
<svg class="b" style="left:906px;top:583px;" width="24" height="24" viewBox="0 0 24 24"><rect x="4" y="4" width="13" height="17" fill="#fff" stroke="#555" stroke-width="1.3"/><path d="M8.5 10 H10 M12 10 H15 M8.5 14 H10 M12 14 H15 M8 17.5 H11" stroke="#777" stroke-width="1.2"/><path d="M5 9 C5.5 5 3.5 3.5 1.2 3.5 M3.5 1 L1 3.5 L3.5 6" fill="none" stroke="#1f6fc4" stroke-width="1.4"/></svg>
<svg class="b" style="left:906px;top:616px;" width="22" height="22" viewBox="0 0 22 22"><rect x="1" y="10" width="6" height="10.5" fill="#c8c8c8" stroke="#666" stroke-width="1.1"/><rect x="7" y="1.5" width="6.5" height="19" fill="#fff" stroke="#444" stroke-width="1.2"/><rect x="13.5" y="5.5" width="6.5" height="15" fill="#8cc0f0" stroke="#1f6fc4" stroke-width="1.3"/></svg>
<svg class="b" style="left:906px;top:647px;" width="22" height="22" viewBox="0 0 22 22"><rect x="1" y="1.5" width="19" height="17.5" fill="#fff" stroke="#444" stroke-width="1.2"/><rect x="1" y="1.5" width="13" height="11.5" fill="#5b9fe4"/><path d="M1 7 H14 M1 13 H20 M7.5 1.5 V19 M14 1.5 V19" stroke="#dfeaf7" stroke-width="1"/><path d="M1 13 H20 M7.5 13 V19 M14 1.5 V13" stroke="#444" stroke-width="1"/><rect x="11.5" y="12" width="4.5" height="8" fill="#5b9fe4" stroke="#1f6fc4" stroke-width="1"/><rect x="16" y="8" width="4" height="12" fill="#fff" stroke="#444" stroke-width="1"/></svg>
<svg class="b" style="left:907px;top:676px;" width="20" height="22" viewBox="0 0 20 22"><path d="M2 3 L14 1.5 L17 3.5 L17 19.5 L14 21 L2 19 Z" fill="#e3e3e3" stroke="#b9b9b9" stroke-width="1.2" stroke-linejoin="round"/><path d="M3 4.5 L14 3.5 V19.5 L3 18 Z" fill="#f6f6f6" stroke="#c4c4c4" stroke-width="1"/></svg>
<svg class="b" style="left:907px;top:709px;" width="22" height="22" viewBox="0 0 22 22"><path d="M8.5 11 V2 H12.5 V6 H16 V10" fill="none" stroke="#444" stroke-width="1.3"/><path d="M1.5 15 V9 H8.5" fill="none" stroke="#444" stroke-width="1.3"/><path d="M9.5 15.5 L17.5 8 C18.8 7 19.8 8 19 9.2 L12 17.5 Z" fill="#f2f2f2" stroke="#444" stroke-width="1"/><path d="M9.5 15.5 C7.5 14.5 5.5 16 5.3 17.5 C5 19 3.5 19.5 2.5 19.3 C5 21.3 9.5 21.3 11.5 19 C12.3 18 12.3 17.5 12 17.5 Z" fill="#3d8fe0" stroke="#1f6fc4" stroke-width="0.8"/></svg>
<div class="b" style="left:0px;top:43px;width:1914px;height:157px;background:#f3f2f1;"></div>
<div class="b" style="left:0px;top:200px;width:1914px;height:7px;background:linear-gradient(#d2d2d2,#e6e6e6);"></div>
<div class="t " style="left:17px;top:51.0px;font-size:17px;line-height:22px;color:#444444;">파일</div>
<div class="t " style="left:83px;top:51.0px;font-size:17px;line-height:22px;color:#2b2b2b;">홈</div>
<div class="t " style="left:127px;top:51.0px;font-size:17px;line-height:22px;color:#444444;">삽입</div>
<div class="t " style="left:187px;top:51.0px;font-size:17px;line-height:22px;color:#444444;">페이지 레이아웃</div>
<div class="t " style="left:339px;top:51.0px;font-size:17px;line-height:22px;color:#444444;">수식</div>
<div class="t " style="left:401px;top:51.0px;font-size:17px;line-height:22px;color:#444444;">데이터</div>
<div class="t " style="left:479px;top:51.0px;font-size:17px;line-height:22px;color:#444444;">검토</div>
<div class="t " style="left:539px;top:51.0px;font-size:17px;line-height:22px;color:#444444;">보기</div>
<div class="t " style="left:600px;top:51.0px;font-size:17px;line-height:22px;color:#444444;">개발 도구</div>
<div class="t " style="left:701px;top:51.0px;font-size:17px;line-height:22px;color:#444444;">도움말</div>
<div class="t " style="left:780px;top:51.0px;font-size:17px;line-height:22px;color:#217346;">디자인</div>
<div class="t " style="left:858px;top:51.0px;font-size:17px;line-height:22px;color:#217346;">서식</div>
<div class="b" style="left:82px;top:75px;width:18px;height:4px;background:#217346;"></div>
<svg class="b" style="left:920px;top:52px;" width="20" height="22" viewBox="0 0 20 22"><circle cx="12" cy="8" r="6" fill="none" stroke="#444" stroke-width="1.4"/><path d="M8 12.5 L1 20.5" stroke="#444" stroke-width="1.6"/></svg>
<div class="t " style="left:951px;top:51.5px;font-size:16.5px;line-height:21px;color:#444444;">어떤 작업을 원하시나요?</div>
<div class="b" style="left:1742.5px;top:47.5px;width:76px;height:29px;background:#fff;border:1px solid #e1dfdd;border-radius:3px;"></div>
<div class="b" style="left:1829px;top:47.5px;width:76px;height:29px;background:#fff;border:1px solid #e1dfdd;border-radius:3px;"></div>
<svg class="b" style="left:1752px;top:53px;" width="17" height="17" viewBox="0 0 17 17"><path d="M7 5 H1.7 V15.3 H13 V11" fill="none" stroke="#217346" stroke-width="1.4"/><path d="M5 11 C5 7 8 5 11 5 V2 L15.5 6.2 L11 10.4 V7.5 C8.5 7.5 6.5 8.5 5 11 Z" fill="none" stroke="#217346" stroke-width="1.3" stroke-linejoin="round"/></svg>
<div class="t " style="left:1773px;top:51.0px;font-size:17px;line-height:22px;color:#217346;font-weight:bold;">공유</div>
<svg class="b" style="left:1838px;top:54px;" width="17" height="16" viewBox="0 0 17 16"><path d="M0.7 0.7 H15.3 V10.3 H6.5 L3 14 V10.3 H0.7 Z" fill="none" stroke="#217346" stroke-width="1.4" stroke-linejoin="round"/></svg>
<div class="t " style="left:1860px;top:51.0px;font-size:17px;line-height:22px;color:#217346;font-weight:bold;">메모</div>
<svg class="b" style="left:1897px;top:186px;" width="12" height="8" viewBox="0 0 12 8"><path d="M1 7 L6 1.5 L11 7" fill="none" stroke="#666" stroke-width="1.6"/></svg>
<div class="b" style="left:188px;top:85px;width:1px;height:111px;background:#c8c6c4;"></div>
<div class="b" style="left:506px;top:85px;width:1px;height:111px;background:#c8c6c4;"></div>
<div class="b" style="left:878px;top:85px;width:1px;height:111px;background:#c8c6c4;"></div>
<div class="b" style="left:1062px;top:85px;width:1px;height:111px;background:#c8c6c4;"></div>
<div class="b" style="left:1255px;top:85px;width:1px;height:111px;background:#c8c6c4;"></div>
<div class="b" style="left:1437px;top:85px;width:1px;height:111px;background:#c8c6c4;"></div>
<div class="b" style="left:1689px;top:85px;width:1px;height:111px;background:#c8c6c4;"></div>
<div class="t " style="left:55px;top:179.5px;font-size:14.5px;line-height:19px;color:#444444;">클립보드</div>
<div class="t " style="left:323px;top:179.5px;font-size:14.5px;line-height:19px;color:#444444;">글꼴</div>
<div class="t " style="left:668px;top:179.5px;font-size:14.5px;line-height:19px;color:#444444;">맞춤</div>
<div class="t " style="left:929px;top:179.5px;font-size:14.5px;line-height:19px;color:#444444;">표시 형식</div>
<div class="t " style="left:1137px;top:179.5px;font-size:14.5px;line-height:19px;color:#444444;">스타일</div>
<div class="t " style="left:1340px;top:179.5px;font-size:14.5px;line-height:19px;color:#444444;">셀</div>
<div class="t " style="left:1549px;top:179.5px;font-size:14.5px;line-height:19px;color:#444444;">편집</div>
<svg class="b" style="left:174px;top:186px;" width="10" height="10" viewBox="0 0 10 10"><path d="M0.5 6 V0.5 H6" fill="none" stroke="#777" stroke-width="1"/><path d="M3.5 3.5 L8.5 8.5 M8.5 4.5 V8.5 H4.5" fill="none" stroke="#777" stroke-width="1"/></svg>
<svg class="b" style="left:493px;top:186px;" width="10" height="10" viewBox="0 0 10 10"><path d="M0.5 6 V0.5 H6" fill="none" stroke="#c0bebc" stroke-width="1"/><path d="M3.5 3.5 L8.5 8.5 M8.5 4.5 V8.5 H4.5" fill="none" stroke="#c0bebc" stroke-width="1"/></svg>
<svg class="b" style="left:865px;top:186px;" width="10" height="10" viewBox="0 0 10 10"><path d="M0.5 6 V0.5 H6" fill="none" stroke="#c0bebc" stroke-width="1"/><path d="M3.5 3.5 L8.5 8.5 M8.5 4.5 V8.5 H4.5" fill="none" stroke="#c0bebc" stroke-width="1"/></svg>
<svg class="b" style="left:1048px;top:186px;" width="10" height="10" viewBox="0 0 10 10"><path d="M0.5 6 V0.5 H6" fill="none" stroke="#c0bebc" stroke-width="1"/><path d="M3.5 3.5 L8.5 8.5 M8.5 4.5 V8.5 H4.5" fill="none" stroke="#c0bebc" stroke-width="1"/></svg>
<svg class="b" style="left:28px;top:89px;" width="40" height="40" viewBox="0 0 40 40"><rect x="2.5" y="5.5" width="26" height="29" fill="#fbe3b6" stroke="#ee9a4d" stroke-width="2.2"/><rect x="5.5" y="8.5" width="20" height="23" fill="#f8f8f8"/><path d="M8 10 V6.5 H12 C12 2.5 19 2.5 19 6.5 H23 V10 Z" fill="#f3f2f1" stroke="#8a8a8a" stroke-width="1.3"/><rect x="19.5" y="16.5" width="16" height="21" fill="#fafafa" stroke="#444" stroke-width="1.5"/></svg>
<div class="t " style="left:15px;top:129.0px;font-size:14.6px;line-height:19px;color:#444444;">붙여넣기</div>
<div class="b" style="left:43.8px;top:157.4px;width:0;height:0;border-left:3.2px solid transparent;border-right:3.2px solid transparent;border-top:3.2px solid #555;"></div>
<svg class="b" style="left:86px;top:90px;" width="14" height="21" viewBox="0 0 14 21"><path d="M2.5 0.5 L9.5 15 M11.5 0.5 L4.5 15" stroke="#444" stroke-width="1.3" fill="none"/><circle cx="3.3" cy="17.3" r="2.3" fill="none" stroke="#1e8ad6" stroke-width="1.4"/><circle cx="10.7" cy="17.3" r="2.3" fill="none" stroke="#1e8ad6" stroke-width="1.4"/></svg>
<div class="t " style="left:107px;top:90.5px;font-size:14.5px;line-height:19px;color:#444444;">잘라내기</div>
<svg class="b" style="left:83px;top:118px;" width="21" height="22" viewBox="0 0 21 22"><path d="M7 16.5 H0.8 V0.8 H8 L11 3.5" fill="none" stroke="#444" stroke-width="1.5"/><path d="M8 5.8 H15 L19.5 10.3 V20.8 H8 Z" fill="#fafafa" stroke="#444" stroke-width="1.5" stroke-linejoin="round"/><path d="M14.5 6 V10.8 H19.3" fill="none" stroke="#444" stroke-width="1.2"/><path d="M11 14 H16.5 M11 17 H16.5" stroke="#777" stroke-width="1.2"/></svg>
<div class="t " style="left:107px;top:119.5px;font-size:14.5px;line-height:19px;color:#444444;">복사</div>
<div class="b" style="left:146.8px;top:127.4px;width:0;height:0;border-left:3.2px solid transparent;border-right:3.2px solid transparent;border-top:3.2px solid #555;"></div>
<svg class="b" style="left:83px;top:147px;" width="22" height="21" viewBox="0 0 22 21"><path d="M12.5 7.5 L17.2 1.6 C18.2 0.6 20.3 2.2 19.5 3.5 L15 9.6" fill="#f3f2f1" stroke="#b9b7b5" stroke-width="1.3" stroke-linejoin="round"/><path d="M9.5 5.8 L17.2 12 L15.2 14.6 L7.4 8.4 Z" fill="#d4d2d0" stroke="#b9b7b5" stroke-width="1.1" stroke-linejoin="round"/><path d="M7.4 8.4 L15.2 14.6 L9.8 19.6 L1.2 11.8 C3.8 11.8 5.8 10.6 7.4 8.4 Z" fill="#e3e2e1" stroke="#b9b7b5" stroke-width="1.2" stroke-linejoin="round"/></svg>
<div class="t " style="left:107px;top:148.5px;font-size:14.5px;line-height:19px;color:#b3b0ad;">서식 복사</div>
<div class="b" style="left:199px;top:96px;width:190px;height:28px;background:#fdfdfd;border:1px solid #c6c6c6;"></div>
<div class="b" style="left:389px;top:96px;width:52px;height:28px;background:#fdfdfd;border:1px solid #c6c6c6;"></div>
<div class="b" style="left:378px;top:108.5px;width:0;height:0;border-left:3px solid transparent;border-right:3px solid transparent;border-top:3px solid #a0a0a0;"></div>
<div class="t " style="left:393px;top:100.5px;font-size:15px;line-height:20px;color:#9a9a9a;">10</div>
<div class="b" style="left:430px;top:108.5px;width:0;height:0;border-left:3px solid transparent;border-right:3px solid transparent;border-top:3px solid #a0a0a0;"></div>
<div class="t " style="left:447px;top:98.0px;font-size:14px;line-height:18px;color:#a5a3a1;">가</div>
<svg class="b" style="left:460px;top:99px;" width="7" height="5" viewBox="0 0 7 5"><path d="M0.8 4.2 L3.5 1 L6.2 4.2" fill="none" stroke="#a5a3a1" stroke-width="1.1"/></svg>
<div class="t " style="left:475px;top:100.5px;font-size:11.5px;line-height:15px;color:#a5a3a1;">가</div>
<svg class="b" style="left:487px;top:99px;" width="7" height="5" viewBox="0 0 7 5"><path d="M0.8 0.8 L3.5 4 L6.2 0.8" fill="none" stroke="#a5a3a1" stroke-width="1.1"/></svg>
<div class="t " style="left:207px;top:139.0px;font-size:14px;line-height:18px;color:#a19f9d;font-weight:bold;">가</div>
<div class="t " style="left:234px;top:139.0px;font-size:14px;line-height:18px;color:#adaba9;font-style:italic;transform:skewX(-12deg);">가</div>
<div class="t " style="left:262px;top:138.0px;font-size:14px;line-height:18px;color:#adaba9;">가</div>
<div class="b" style="left:262px;top:155.5px;width:14px;height:1.2px;background:#adaba9;"></div>
<div class="b" style="left:287px;top:147.5px;width:0;height:0;border-left:3px solid transparent;border-right:3px solid transparent;border-top:3px solid #c0bebc;"></div>
<div class="b" style="left:302px;top:137px;width:1px;height:25px;background:#d2d0ce;"></div>
<svg class="b" style="left:311px;top:138px;" width="20" height="21" viewBox="0 0 20 21"><rect x="0.5" y="0.5" width="18" height="16" fill="#eceae9" stroke="#e0dedc" stroke-dasharray="1.5 1"/><path d="M9.5 1 V17 M1 8.5 H18.5" stroke="#d8d6d4" stroke-width="1"/><rect x="0" y="17" width="19.5" height="2.6" fill="#b8b5b2"/></svg>
<div class="b" style="left:339px;top:147.5px;width:0;height:0;border-left:3px solid transparent;border-right:3px solid transparent;border-top:3px solid #c0bebc;"></div>
<div class="b" style="left:354px;top:137px;width:1px;height:25px;background:#d2d0ce;"></div>
<svg class="b" style="left:363px;top:137px;" width="22" height="23" viewBox="0 0 22 23"><path d="M9 3.5 L3.5 11 L10 15.5 L16 8 Z" fill="none" stroke="#9f9d9b" stroke-width="1.3" stroke-linejoin="round"/><path d="M8.5 4 C8 0 13 0 12.5 5" fill="none" stroke="#9f9d9b" stroke-width="1.2"/><path d="M16 8 C18 9 18 12 17.5 14" fill="none" stroke="#9f9d9b" stroke-width="1.2"/><rect x="0" y="17" width="20" height="4.5" fill="#b3b0ad"/></svg>
<div class="b" style="left:391px;top:147.5px;width:0;height:0;border-left:3px solid transparent;border-right:3px solid transparent;border-top:3px solid #c0bebc;"></div>
<div class="t " style="left:409px;top:135.5px;font-size:14.5px;line-height:19px;color:#8f8d8b;font-weight:bold;">가</div>
<div class="b" style="left:406px;top:154px;width:20px;height:4.5px;background:#b3b0ad;"></div>
<div class="b" style="left:434px;top:147.5px;width:0;height:0;border-left:3px solid transparent;border-right:3px solid transparent;border-top:3px solid #c0bebc;"></div>
<div class="b" style="left:449px;top:137px;width:1px;height:25px;background:#d2d0ce;"></div>
<div class="t " style="left:458px;top:137.5px;font-size:8.5px;line-height:11px;color:#b8b6b4;">내천</div>
<div class="t " style="left:470px;top:149.5px;font-size:8.5px;line-height:11px;color:#b8b6b4;">川</div>
<div class="b" style="left:486px;top:147.5px;width:0;height:0;border-left:3px solid transparent;border-right:3px solid transparent;border-top:3px solid #c0bebc;"></div>
<svg class="b" style="left:522px;top:99px;" width="18" height="24" viewBox="0 0 18 24"><rect x="0" y="0.0" width="18" height="1.4" fill="#b0aeac"/><rect x="0" y="5.5" width="18" height="1.4" fill="#b0aeac"/><rect x="0" y="11.0" width="18" height="1.4" fill="#b0aeac"/></svg>
<svg class="b" style="left:550px;top:103px;" width="18" height="24" viewBox="0 0 18 24"><rect x="0" y="0.0" width="18" height="1.4" fill="#b0aeac"/><rect x="0" y="5.5" width="18" height="1.4" fill="#b0aeac"/><rect x="0" y="11.0" width="18" height="1.4" fill="#b0aeac"/></svg>
<svg class="b" style="left:578px;top:108px;" width="18" height="24" viewBox="0 0 18 24"><rect x="0" y="0.0" width="18" height="1.4" fill="#b0aeac"/><rect x="0" y="5.5" width="18" height="1.4" fill="#b0aeac"/><rect x="0" y="11.0" width="18" height="1.4" fill="#b0aeac"/></svg>
<div class="b" style="left:605px;top:97px;width:1px;height:25px;background:#d2d0ce;"></div>
<svg class="b" style="left:613px;top:98px;" width="22" height="22" viewBox="0 0 22 22"><path d="M7 20 L19 7 M14 6.5 H19.5 V12" fill="none" stroke="#b0aeac" stroke-width="1.4"/><text x="0" y="9" font-size="8" fill="#b0aeac" font-weight="bold" transform="rotate(-45 6 9)" font-family="Liberation Sans">가나</text></svg>
<div class="b" style="left:638px;top:108.5px;width:0;height:0;border-left:3px solid transparent;border-right:3px solid transparent;border-top:3px solid #c0bebc;"></div>
<div class="b" style="left:670px;top:91px;width:1px;height:76px;background:#d2d0ce;"></div>
<svg class="b" style="left:679px;top:98px;" width="21" height="21" viewBox="0 0 21 21"><text x="0" y="8" font-size="8.5" font-weight="bold" fill="#a8a6a4" font-family="Liberation Sans">가나</text><text x="0" y="17" font-size="8.5" font-weight="bold" fill="#a8a6a4" font-family="Liberation Sans">다</text><path d="M17.5 4 V11 C17.5 15 14 15.5 10.5 15.5 M13.5 12.5 L10.3 15.5 L13.5 18.5" fill="none" stroke="#a8a6a4" stroke-width="1.3"/></svg>
<div class="t " style="left:703px;top:99.5px;font-size:14.5px;line-height:19px;color:#b3b0ad;">자동 줄 바꿈</div>
<svg class="b" style="left:522px;top:138.7px;" width="18" height="24" viewBox="0 0 18 24"><rect x="0" y="0.0" width="18" height="1.4" fill="#b0aeac"/><rect x="0" y="5.5" width="12" height="1.4" fill="#b0aeac"/><rect x="0" y="11.0" width="18" height="1.4" fill="#b0aeac"/><rect x="0" y="16.5" width="12" height="1.4" fill="#b0aeac"/></svg>
<svg class="b" style="left:550px;top:138.7px;" width="18" height="24" viewBox="0 0 18 24"><rect x="0.0" y="0.0" width="18" height="1.4" fill="#b0aeac"/><rect x="3.0" y="5.5" width="12" height="1.4" fill="#b0aeac"/><rect x="0.0" y="11.0" width="18" height="1.4" fill="#b0aeac"/><rect x="3.0" y="16.5" width="12" height="1.4" fill="#b0aeac"/></svg>
<svg class="b" style="left:578px;top:138.7px;" width="18" height="24" viewBox="0 0 18 24"><rect x="0" y="0.0" width="18" height="1.4" fill="#b0aeac"/><rect x="6" y="5.5" width="12" height="1.4" fill="#b0aeac"/><rect x="0" y="11.0" width="18" height="1.4" fill="#b0aeac"/><rect x="6" y="16.5" width="12" height="1.4" fill="#b0aeac"/></svg>
<div class="b" style="left:605px;top:136px;width:1px;height:25px;background:#d2d0ce;"></div>
<svg class="b" style="left:615px;top:139px;" width="19" height="18" viewBox="0 0 19 18"><path d="M0 0.7 H18 M9 6.2 H18 M9 11.7 H18 M0 17.2 H18" stroke="#b0aeac" stroke-width="1.4"/><path d="M7 9 H0.8 M3.5 6 L0.8 9 L3.5 12" fill="none" stroke="#b0aeac" stroke-width="1.3"/></svg>
<svg class="b" style="left:643px;top:139px;" width="19" height="18" viewBox="0 0 19 18"><path d="M0 0.7 H18 M9 6.2 H18 M9 11.7 H18 M0 17.2 H18" stroke="#b0aeac" stroke-width="1.4"/><path d="M0 9 H6.5 M3.8 6 L6.5 9 L3.8 12" fill="none" stroke="#b0aeac" stroke-width="1.3"/></svg>
<svg class="b" style="left:679px;top:138px;" width="20" height="20" viewBox="0 0 20 20"><rect x="0.8" y="0.8" width="18" height="18" fill="#eceae9" stroke="#9f9d9b" stroke-width="1.5"/><path d="M1 5 H19 M1 14.5 H19 M10 1 V5 M10 14.5 V19" stroke="#9f9d9b" stroke-width="1.2"/><path d="M3.5 9.8 H16 M6 7.3 L3.5 9.8 L6 12.3 M13.5 7.3 L16 9.8 L13.5 12.3" fill="none" stroke="#9f9d9b" stroke-width="1.2"/></svg>
<div class="t " style="left:703px;top:138.5px;font-size:14.5px;line-height:19px;color:#b3b0ad;">병합하고 가운데 맞춤</div>
<div class="b" style="left:858px;top:147.5px;width:0;height:0;border-left:3px solid transparent;border-right:3px solid transparent;border-top:3px solid #c0bebc;"></div>
<div class="b" style="left:889px;top:96px;width:164px;height:28px;background:#fdfdfd;border:1px solid #c6c6c6;"></div>
<div class="t " style="left:894px;top:100.5px;font-size:14.5px;line-height:19px;color:#9a9a9a;">일반</div>
<div class="b" style="left:1042px;top:108.5px;width:0;height:0;border-left:3px solid transparent;border-right:3px solid transparent;border-top:3px solid #a0a0a0;"></div>
<svg class="b" style="left:893px;top:141px;" width="21" height="18" viewBox="0 0 21 18"><rect x="0.7" y="1.7" width="18" height="10.5" fill="#e4e2e0" stroke="#a8a6a4" stroke-width="1.3"/><ellipse cx="7" cy="7" rx="2.5" ry="3" fill="none" stroke="#a8a6a4" stroke-width="1.2"/><path d="M11 8 V14.5 C11 17.5 19.5 17.5 19.5 14.5 V8 C19.5 5 11 5 11 8 Z" fill="#e9e7e5" stroke="#b5b3b1" stroke-width="1.1"/><path d="M11 8 C11 11 19.5 11 19.5 8 M11 11.3 C11 14.3 19.5 14.3 19.5 11.3" fill="none" stroke="#b5b3b1" stroke-width="1"/></svg>
<div class="b" style="left:921px;top:147.5px;width:0;height:0;border-left:3px solid transparent;border-right:3px solid transparent;border-top:3px solid #c0bebc;"></div>
<div class="t " style="left:935px;top:134.0px;font-size:23px;line-height:30px;color:#a8a6a4;">%</div>
<svg class="b" style="left:967px;top:140px;" width="14" height="18" viewBox="0 0 14 18"><path d="M6.5 2 C9.5 2 11.5 4.2 11.5 7.5 C11.5 12 8 15.5 3 16.8 L2.6 15.6 C5.6 14.4 7.2 12.6 7.4 10.6 C4.6 11 2.6 9.2 2.6 6.6 C2.6 3.8 4.2 2 6.5 2 Z" fill="#a19f9d"/></svg>
<div class="b" style="left:992px;top:137px;width:1px;height:25px;background:#d2d0ce;"></div>
<svg class="b" style="left:1001px;top:139px;" width="21" height="20" viewBox="0 0 21 20"><path d="M1 5 H8 M3.5 2.5 L1 5 L3.5 7.5" fill="none" stroke="#b0aeac" stroke-width="1.2"/><text x="9.5" y="8.5" font-size="10" fill="#b0aeac" font-family="Liberation Sans">.0</text><text x="3" y="18.5" font-size="10" fill="#b0aeac" font-family="Liberation Sans">.00</text></svg>
<svg class="b" style="left:1028px;top:139px;" width="21" height="20" viewBox="0 0 21 20"><text x="4" y="8.5" font-size="10" fill="#b0aeac" font-family="Liberation Sans">.00</text><path d="M1 14.5 H8 M5.5 12 L8 14.5 L5.5 17" fill="none" stroke="#b0aeac" stroke-width="1.2"/><text x="9.5" y="18.5" font-size="10" fill="#b0aeac" font-family="Liberation Sans">.0</text></svg>
<svg class="b" style="left:1082px;top:93px;" width="37" height="29" viewBox="0 0 37 29"><rect x="1" y="1" width="34" height="26" fill="#ecebea" stroke="#a9a7a5" stroke-width="1.6"/><path d="M1 10 H35 M1 18.5 H35 M8 1 V27 M22 1 V27 M29 1 V27" stroke="#a9a7a5" stroke-width="1.1"/><rect x="8.5" y="1.8" width="13" height="8" fill="#d4d2d0"/><rect x="8.5" y="10.5" width="7" height="7.5" fill="#d4d2d0"/><rect x="8.5" y="19" width="13" height="7.5" fill="#d4d2d0"/></svg>
<svg class="b" style="left:1136px;top:93px;" width="40" height="34" viewBox="0 0 40 34"><rect x="1" y="1" width="34" height="26" fill="#ecebea" stroke="#a9a7a5" stroke-width="1.6"/><rect x="12.5" y="10" width="22" height="17" fill="#d4d2d0"/><path d="M1 10 H35 M1 18.5 H35 M12.5 1 V27 M24 1 V27" stroke="#a9a7a5" stroke-width="1.1"/><path d="M36 8 C37.6 7.6 38.3 9.3 37.2 10.8 L25.8 25.2 L21.6 22 L34.2 8.8 Z" fill="#ecebea" stroke="#a9a7a5" stroke-width="1.1" stroke-linejoin="round"/><path d="M21.6 22 L25.8 25.2 C24.5 30 17 32.3 9 31 C13.5 29.8 15 27.5 15.8 25 C16.8 22.3 19.5 21.2 21.6 22 Z" fill="#d4d2d0" stroke="#a9a7a5" stroke-width="1.1" stroke-linejoin="round"/></svg>
<svg class="b" style="left:1195px;top:93px;" width="40" height="34" viewBox="0 0 40 34"><rect x="1" y="1" width="34" height="26" fill="#ecebea" stroke="#a9a7a5" stroke-width="1.6"/><rect x="8" y="7" width="21" height="14" fill="#d4d2d0"/><path d="M1 7 H35 M1 21 H35 M8 1 V27 M29 1 V27" stroke="#a9a7a5" stroke-width="1.1"/><path d="M36 8 C37.6 7.6 38.3 9.3 37.2 10.8 L25.8 25.2 L21.6 22 L34.2 8.8 Z" fill="#ecebea" stroke="#a9a7a5" stroke-width="1.1" stroke-linejoin="round"/><path d="M21.6 22 L25.8 25.2 C24.5 30 17 32.3 9 31 C13.5 29.8 15 27.5 15.8 25 C16.8 22.3 19.5 21.2 21.6 22 Z" fill="#d4d2d0" stroke="#a9a7a5" stroke-width="1.1" stroke-linejoin="round"/></svg>
<div class="t " style="left:1078px;top:129.5px;font-size:14.5px;line-height:19px;color:#b3b0ad;">조건부</div>
<div class="t " style="left:1078px;top:149.5px;font-size:14.5px;line-height:19px;color:#b3b0ad;">서식</div>
<div class="b" style="left:1113px;top:158.5px;width:0;height:0;border-left:3px solid transparent;border-right:3px solid transparent;border-top:3px solid #c0bebc;"></div>
<div class="t " style="left:1146px;top:129.5px;font-size:14.5px;line-height:19px;color:#b3b0ad;">표</div>
<div class="t " style="left:1133px;top:149.5px;font-size:14.5px;line-height:19px;color:#b3b0ad;">서식</div>
<div class="b" style="left:1168px;top:158.5px;width:0;height:0;border-left:3px solid transparent;border-right:3px solid transparent;border-top:3px solid #c0bebc;"></div>
<div class="t " style="left:1206px;top:129.5px;font-size:14.5px;line-height:19px;color:#b3b0ad;">셀</div>
<div class="t " style="left:1186px;top:149.5px;font-size:14.5px;line-height:19px;color:#b3b0ad;">스타일</div>
<div class="b" style="left:1236px;top:158.5px;width:0;height:0;border-left:3px solid transparent;border-right:3px solid transparent;border-top:3px solid #c0bebc;"></div>
<svg class="b" style="left:1274px;top:93px;" width="38" height="29" viewBox="0 0 38 29"><rect x="2" y="1" width="34" height="26" fill="#ecebea" stroke="#a9a7a5" stroke-width="1.5" stroke-dasharray="3 0"/><path d="M2 10 H36 M2 18.5 H36 M13 1 V27 M25 1 V27" stroke="#a9a7a5" stroke-width="1.1"/><rect x="9" y="9.5" width="29" height="9.5" fill="#d4d2d0" stroke="#a9a7a5" stroke-width="0.8"/><path d="M15 14.2 H1 M6 9.5 L1 14.2 L6 19" fill="none" stroke="#a9a7a5" stroke-width="1.6"/></svg>
<svg class="b" style="left:1328px;top:93px;" width="38" height="29" viewBox="0 0 38 29"><rect x="1" y="1" width="34" height="26" fill="#ecebea" stroke="#a9a7a5" stroke-width="1.5"/><path d="M1 10 H35 M1 18.5 H35 M12.5 1 V27 M24 1 V27" stroke="#a9a7a5" stroke-width="1.1"/><rect x="6" y="9.5" width="18" height="9.5" fill="#d4d2d0" stroke="#a9a7a5" stroke-width="0.8"/><path d="M24 6 L37 22 M37 6 L24 22" stroke="#d4d2d0" stroke-width="2.2"/><path d="M24 6 L37 22 M37 6 L24 22" stroke="#a9a7a5" stroke-width="1"/></svg>
<svg class="b" style="left:1383px;top:86px;" width="38" height="37" viewBox="0 0 38 37"><path d="M9 2.5 H29 M9 0 V5 M29 0 V5" stroke="#1e8ad6" stroke-width="1.3" fill="none"/><rect x="1" y="8" width="35" height="27" fill="#fafafa" stroke="#555" stroke-width="1.7"/><path d="M1 17 H36 M1 26 H36 M10.5 8 V35 M27.5 8 V35" stroke="#555" stroke-width="1.2"/><rect x="10.5" y="17" width="17" height="9" fill="#5aa5e6" stroke="#1e6fc0" stroke-width="1.2"/></svg>
<div class="t " style="left:1278px;top:129.5px;font-size:14.5px;line-height:19px;color:#444444;">삽입</div>
<div class="b" style="left:1290.8px;top:157.9px;width:0;height:0;border-left:3.2px solid transparent;border-right:3.2px solid transparent;border-top:3.2px solid #555;"></div>
<div class="t " style="left:1332px;top:129.5px;font-size:14.5px;line-height:19px;color:#444444;">삭제</div>
<div class="b" style="left:1344.8px;top:157.9px;width:0;height:0;border-left:3.2px solid transparent;border-right:3.2px solid transparent;border-top:3.2px solid #555;"></div>
<div class="t " style="left:1386px;top:129.5px;font-size:14.5px;line-height:19px;color:#444444;">서식</div>
<div class="b" style="left:1398.8px;top:157.9px;width:0;height:0;border-left:3.2px solid transparent;border-right:3.2px solid transparent;border-top:3.2px solid #555;"></div>
<svg class="b" style="left:1453px;top:88px;" width="17" height="19" viewBox="0 0 17 19"><path d="M15.5 4 V1 H1.5 L9 9.5 L1.5 18 H15.5 V15" fill="none" stroke="#b0aeac" stroke-width="1.5"/></svg>
<div class="t " style="left:1475px;top:87.5px;font-size:14.5px;line-height:19px;color:#b3b0ad;">자동 합계</div>
<div class="b" style="left:1550px;top:96.5px;width:0;height:0;border-left:3px solid transparent;border-right:3px solid transparent;border-top:3px solid #c0bebc;"></div>
<svg class="b" style="left:1452px;top:115px;" width="21" height="19" viewBox="0 0 21 19"><rect x="0.8" y="0.8" width="19" height="17" fill="#efeeed" stroke="#b0aeac" stroke-width="1.4"/><path d="M1 4 H20" stroke="#b0aeac" stroke-width="1.2"/><path d="M10.3 6.5 V14.5 M7 11.5 L10.3 14.8 L13.6 11.5" fill="none" stroke="#b0aeac" stroke-width="1.3"/></svg>
<div class="t " style="left:1475px;top:114.5px;font-size:14.5px;line-height:19px;color:#b3b0ad;">채우기</div>
<div class="b" style="left:1525px;top:123.5px;width:0;height:0;border-left:3px solid transparent;border-right:3px solid transparent;border-top:3px solid #c0bebc;"></div>
<svg class="b" style="left:1451px;top:141px;" width="22" height="21" viewBox="0 0 22 21"><path d="M12 1.5 L20.5 10 L9.5 19.5 L1.5 12 Z" fill="#fdfdfd" stroke="#a13fa8" stroke-width="1.6" stroke-linejoin="round"/><path d="M6.5 7 L14.5 15 L9.5 19.5 L1.5 12 Z" fill="#d99ad9" stroke="#a13fa8" stroke-width="1.4" stroke-linejoin="round"/></svg>
<div class="t " style="left:1475px;top:141.5px;font-size:14.5px;line-height:19px;color:#444444;">지우기</div>
<div class="b" style="left:1524.8px;top:150.4px;width:0;height:0;border-left:3.2px solid transparent;border-right:3.2px solid transparent;border-top:3.2px solid #555;"></div>
<svg class="b" style="left:1572px;top:92px;" width="38" height="31" viewBox="0 0 38 31"><path d="M1 2 H11 V10" fill="none" stroke="#b0aeac" stroke-width="1.6"/><path d="M0 14 H14" stroke="#b0aeac" stroke-width="1.6"/><ellipse cx="7" cy="22.5" rx="4.6" ry="4" fill="none" stroke="#b0aeac" stroke-width="1.6"/><path d="M16.5 6.5 H36.5 L29 16 V26 L24 28 V16 Z" fill="#f7f6f5" stroke="#b0aeac" stroke-width="1.5" stroke-linejoin="round"/></svg>
<div class="t " style="left:1566px;top:129.5px;font-size:14.5px;line-height:19px;color:#b3b0ad;">정렬 및</div>
<div class="t " style="left:1570px;top:149.5px;font-size:14.5px;line-height:19px;color:#b3b0ad;">필터</div>
<div class="b" style="left:1605px;top:158.5px;width:0;height:0;border-left:3px solid transparent;border-right:3px solid transparent;border-top:3px solid #c0bebc;"></div>
<svg class="b" style="left:1630px;top:88px;" width="40" height="40" viewBox="0 0 40 40"><circle cx="25" cy="14" r="12.5" fill="#f8f8f8" stroke="#444" stroke-width="1.5"/><path d="M16 23.5 L1 38" stroke="#444" stroke-width="1.7"/></svg>
<div class="t " style="left:1625px;top:129.5px;font-size:14.5px;line-height:19px;color:#333;">찾기 및</div>
<div class="t " style="left:1630px;top:149.5px;font-size:14.5px;line-height:19px;color:#333;">선택</div>
<div class="b" style="left:1664.8px;top:158.4px;width:0;height:0;border-left:3.2px solid transparent;border-right:3.2px solid transparent;border-top:3.2px solid #555;"></div>
<div class="b" style="left:0px;top:0px;width:1914px;height:43px;background:#217346;"></div>
<svg class="b" style="left:1300px;top:0px;overflow:hidden;" width="614" height="43" viewBox="0 0 614 43"><g fill="#1e6a40"><rect x="55" y="0" width="5" height="30"/><rect x="72" y="0" width="8" height="39"/><polygon points="128,24 140,24 162,38 162,0 190,0 190,40 150,40"/><rect x="193" y="0" width="4" height="38"/><rect x="200" y="0" width="3" height="36"/><rect x="206" y="0" width="3" height="33"/><rect x="212" y="0" width="2" height="30"/><rect x="217" y="0" width="2" height="27"/><circle cx="328" cy="14" r="22" fill="none" stroke="#1e6a40" stroke-width="10"/><polygon points="380,24 400,24 425,40 405,40"/><polygon points="410,24 428,24 453,40 435,40"/><polygon points="438,24 455,24 480,40 463,40"/><polygon points="478,40 500,24 520,24 502,40"/><polygon points="545,40 562,24 572,24 556,40"/><polygon points="562,40 579,24 589,24 573,40"/><polygon points="579,40 596,24 606,24 590,40"/></g></svg>
<div class="b" style="left:766px;top:0px;width:139px;height:43px;background:#185c37;"></div>
<div class="t " style="left:30px;top:9.0px;font-size:16.5px;line-height:21px;color:#fff;">자동 저장</div>
<div class="b" style="left:101px;top:8px;width:44px;height:22px;border:1.5px solid #fff;border-radius:11px;"></div>
<div class="b" style="left:108px;top:15px;width:8px;height:8px;background:#fff;border-radius:4px;"></div>
<div class="t " style="left:121px;top:11.0px;font-size:12px;line-height:16px;color:#fff;">끔</div>
<svg class="b" style="left:166px;top:8px;" width="22" height="24" viewBox="0 0 22 24"><path d="M1 1 H17 L21 5 V23 H1 Z M5 1 V8 H15 V1 M5 23 V14 H17 V23" fill="none" stroke="#fff" stroke-width="1.5"/></svg>
<svg class="b" style="left:203px;top:8px;" width="24" height="24" viewBox="0 0 24 24"><path d="M3 8 H15 a6 6 0 0 1 0 12 L9 24" fill="none" stroke="#fff" stroke-width="1.6"/><path d="M8 3 L3 8 L8 13" fill="none" stroke="#fff" stroke-width="1.6"/></svg>
<div class="b" style="left:230px;top:17.5px;width:0;height:0;border-left:3px solid transparent;border-right:3px solid transparent;border-top:3px solid #fff;"></div>
<svg class="b" style="left:250px;top:10px;" width="24" height="24" viewBox="0 0 24 24"><path d="M20 6 H8 a6 6 0 0 0 0 12 L14 24" fill="none" stroke="#6fa588" stroke-width="1.6"/></svg>
<div class="b" style="left:275px;top:17.5px;width:0;height:0;border-left:3px solid transparent;border-right:3px solid transparent;border-top:3px solid #6fa588;"></div>
<div class="b" style="left:298px;top:19.5px;width:0;height:0;border-left:3px solid transparent;border-right:3px solid transparent;border-top:3px solid #fff;"></div>
<div class="t " style="left:458px;top:8.7px;font-size:16px;line-height:21px;color:#fff;letter-spacing:-0.3px;">섹션16문제<span style="font-size:15px">.xlsm&nbsp; -&nbsp; Excel</span></div>
<div class="t " style="left:803px;top:7.1px;font-size:16px;line-height:21px;color:#fff;">차트 도구</div>
<div class="t " style="left:1632px;top:9.5px;font-size:16px;line-height:21px;color:#fff;">조 아민</div>
<svg class="b" style="left:1712px;top:12px;" width="16" height="14" viewBox="0 0 16 14"><rect x="0.75" y="0.75" width="14" height="12" fill="none" stroke="#fff" stroke-width="1.2"/><path d="M0.75 4 H14.75 M7.75 11 V6 M5.5 8 L7.75 6 L10 8" fill="none" stroke="#fff" stroke-width="1.2"/></svg>
<div class="b" style="left:1770px;top:20px;width:12px;height:1px;background:#fff;"></div>
<svg class="b" style="left:1827px;top:12px;" width="14" height="15" viewBox="0 0 14 15"><path d="M3 3 V0.6 H13.4 V11 H11" fill="none" stroke="#fff" stroke-width="1.2"/><rect x="0.6" y="3.6" width="10.4" height="10.4" fill="none" stroke="#fff" stroke-width="1.2"/></svg>
<svg class="b" style="left:1883px;top:13px;" width="14" height="14" viewBox="0 0 14 14"><path d="M0 0 L14 14 M14 0 L0 14" stroke="#fff" stroke-width="1.2"/></svg>
<div class="b" style="left:0px;top:0px;width:1920px;height:24px;background:rgba(30,38,64,0.90);"></div>
<div class="b" style="left:0px;top:0px;width:1920px;height:1px;background:#15251f;"></div>
<div class="b" style="left:1914px;top:0px;width:6px;height:1030px;background:#333856;"></div>
<div class="b" style="left:1919px;top:0px;width:1px;height:1028px;background:#2b3339;"></div>
<div class="b" style="left:1914px;top:0px;width:6px;height:43px;background:#232b45;"></div>
<div class="b" style="left:3px;top:3px;width:36px;height:18px;border:1px solid #474f68;"></div>
<div class="b" style="left:50px;top:3px;width:35px;height:18px;border:1px solid #474f68;"></div>
<div class="b" style="left:89px;top:3px;width:80px;height:18px;border:1px solid #474f68;"></div>
<div class="t " style="left:10.5px;top:4.0px;font-size:12px;line-height:16px;color:#e4e6ea;letter-spacing:-1.2px;">1931</div>
<div class="t " style="left:41px;top:3.0px;font-size:12px;line-height:16px;color:#9aa0b0;">&times;</div>
<div class="t " style="left:59px;top:4.0px;font-size:12px;line-height:16px;color:#e4e6ea;letter-spacing:-1.1px;">999</div>
<svg class="b" style="left:92px;top:7px;" width="11" height="10" viewBox="0 0 11 10"><path d="M0.5 3 V0.5 H3.5 M7.5 0.5 H10.5 V3 M10.5 7 V9.5 H7.5 M3.5 9.5 H0.5 V7" fill="none" stroke="#e4e6ea" stroke-width="1.1"/></svg>
<div class="t " style="left:106px;top:4.0px;font-size:12px;line-height:16px;color:#e4e6ea;">캡쳐 하기</div>
<div class="b" style="left:160px;top:5px;width:1px;height:14px;background:#474f68;"></div>
<div class="b" style="left:162.0px;top:10.8px;width:0;height:0;border-left:2.5px solid transparent;border-right:2.5px solid transparent;border-top:2.5px solid #7d8498;"></div>
<div class="b" style="left:1842px;top:9px;width:49px;height:5px;background:#161d33;border-radius:3px;border-bottom:1px solid #4a5270;"></div>
<div class="b" style="left:1877px;top:7px;width:9px;height:9px;background:#d5d8e0;border-radius:5px;"></div>
<svg class="b" style="left:1901px;top:6px;" width="12" height="12" viewBox="0 0 12 12"><path d="M0.5 0.5 L11.5 11.5 M11.5 0.5 L0.5 11.5" stroke="#fff" stroke-width="2"/></svg>
<div class="b" style="left:1898px;top:262px;width:16px;height:19px;background:#fff;border:1px solid #cfcfcf;"></div>
<svg class="b" style="left:1903px;top:269px;" width="10" height="6" viewBox="0 0 10 6"><polygon points="0,5.5 4.8,0.3 9.6,5.5" fill="#777"/></svg>
<div class="b" style="left:1898px;top:281px;width:16px;height:643px;background:#fff;border:1px solid #ababab;border-right:none;"></div>
<div class="b" style="left:1898px;top:924px;width:16px;height:32px;background:#dadada;"></div>
<div class="b" style="left:1898px;top:955px;width:16px;height:18px;background:#fff;border:1px solid #cfcfcf;"></div>
<svg class="b" style="left:1902px;top:961px;" width="10" height="6" viewBox="0 0 10 6"><polygon points="0,0.3 9.6,0.3 4.8,5.5" fill="#777"/></svg>
<div class="b" style="left:0px;top:973px;width:1914px;height:30px;background:#e6e6e6;"></div>
<div class="b" style="left:0px;top:973px;width:1895px;height:1px;background:#a6a6a6;"></div>
<svg class="b" style="left:27px;top:981px;" width="8" height="12" viewBox="0 0 8 12"><polygon points="6,1 6,11 1,6" fill="#c6c6c6"/></svg>
<svg class="b" style="left:56px;top:981px;" width="8" height="12" viewBox="0 0 8 12"><polygon points="1,1 1,11 6,6" fill="#c6c6c6"/></svg>
<div class="b" style="left:103px;top:973px;width:144px;height:25px;background:#fff;border-left:1px solid #ababab;border-right:1px solid #ababab;border-bottom:2px solid #217346;"></div>
<div class="t " style="left:115px;top:974.0px;font-size:17px;line-height:22px;color:#217346;">무작정따라하기</div>
<div class="t " style="left:260px;top:974.0px;font-size:17px;line-height:22px;color:#444;">기출01</div>
<div class="b" style="left:324px;top:978px;width:1px;height:20px;background:#a6a6a6;"></div>
<div class="t " style="left:338px;top:974.0px;font-size:17px;line-height:22px;color:#444;">기출02</div>
<div class="b" style="left:401px;top:978px;width:1px;height:20px;background:#a6a6a6;"></div>
<svg class="b" style="left:434px;top:977px;" width="22" height="22" viewBox="0 0 22 22"><circle cx="11" cy="11" r="9.3" fill="none" stroke="#6a6a6a" stroke-width="1.3"/><path d="M6 11 H16 M11 6 V16" stroke="#6a6a6a" stroke-width="1.6"/></svg>
<div class="b" style="left:1149.5px;top:981px;width:2.5px;height:2.5px;background:#b5b5b5;"></div>
<div class="b" style="left:1149.5px;top:986px;width:2.5px;height:2.5px;background:#b5b5b5;"></div>
<div class="b" style="left:1149.5px;top:991px;width:2.5px;height:2.5px;background:#b5b5b5;"></div>
<div class="b" style="left:1167px;top:978px;width:19px;height:19px;background:#fff;border:1px solid #cfcfcf;"></div>
<svg class="b" style="left:1172px;top:982px;" width="8" height="11" viewBox="0 0 8 11"><polygon points="6.5,0.5 6.5,10.5 0.8,5.5" fill="#777"/></svg>
<div class="b" style="left:1187px;top:978px;width:652px;height:19px;background:#fff;border:1px solid #ababab;"></div>
<div class="b" style="left:1839px;top:978px;width:37px;height:19px;background:#dadada;"></div>
<div class="b" style="left:1878px;top:978px;width:19px;height:19px;background:#fff;border:1px solid #cfcfcf;"></div>
<svg class="b" style="left:1884px;top:982px;" width="8" height="11" viewBox="0 0 8 11"><polygon points="1,0.5 1,10.5 6.7,5.5" fill="#777"/></svg>
<div class="b" style="left:0px;top:1002px;width:1914px;height:21px;background:#f3f2f1;"></div>
<div class="b" style="left:0px;top:1002px;width:1914px;height:1px;background:#dcdcdc;"></div>
<div class="t " style="left:9px;top:1007.0px;font-size:14.5px;line-height:19px;color:#505050;">준비</div>
<div class="t " style="left:54px;top:1007.0px;font-size:14.5px;line-height:19px;color:#505050;">계산</div>
<svg class="b" style="left:105px;top:1008px;" width="16" height="15" viewBox="0 0 16 15"><rect x="3" y="3" width="12" height="12" fill="#fff" stroke="#666" stroke-width="1.2"/><path d="M3 7 H15 M7 7 V15 M11 7 V15 M3 11 H15" stroke="#666" stroke-width="1"/><circle cx="3.5" cy="3.5" r="3" fill="#555"/></svg>
<div class="t " style="left:1232px;top:1007.5px;font-size:14.2px;line-height:18px;color:#505050;">평균: 7415000.016</div>
<div class="t " style="left:1368px;top:1007.5px;font-size:14.2px;line-height:18px;color:#505050;">개수: 14</div>
<div class="t " style="left:1438px;top:1007.5px;font-size:14.2px;line-height:18px;color:#505050;">합계: 88980000.19</div>
<div class="b" style="left:1579px;top:1003px;width:42px;height:20px;background:#c9c9c9;"></div>
<svg class="b" style="left:1592px;top:1008px;" width="17" height="15" viewBox="0 0 17 15"><rect x="0.6" y="0.6" width="15.5" height="14" fill="none" stroke="#666" stroke-width="1.1"/><path d="M0.6 5.3 H16 M0.6 10 H16 M5.7 0.6 V15 M10.9 0.6 V15" stroke="#666" stroke-width="1.1"/></svg>
<svg class="b" style="left:1633px;top:1008px;" width="17" height="15" viewBox="0 0 17 15"><rect x="0.6" y="0.6" width="15.5" height="14" fill="none" stroke="#666" stroke-width="1.1"/><rect x="3.5" y="3.5" width="9.5" height="9" fill="none" stroke="#666" stroke-width="1"/><path d="M5.5 6 H11 M5.5 8 H11 M5.5 10 H11" stroke="#666" stroke-width="0.9"/></svg>
<svg class="b" style="left:1675px;top:1008px;" width="17" height="15" viewBox="0 0 17 15"><rect x="0.6" y="0.6" width="15.5" height="14" fill="none" stroke="#666" stroke-width="1.1"/><path d="M5 0.6 V8 H11.5 V0.6" fill="none" stroke="#666" stroke-width="1.1"/></svg>
<div class="b" style="left:1710px;top:1015px;width:10px;height:2px;background:#666;"></div>
<div class="b" style="left:1725px;top:1016px;width:123px;height:1px;background:#a0a0a0;"></div>
<div class="b" style="left:1783.5px;top:1008px;width:5px;height:15px;background:#777;"></div>
<div class="b" style="left:1852px;top:1015px;width:11px;height:2px;background:#555;"></div>
<div class="b" style="left:1856.5px;top:1010.5px;width:2px;height:11px;background:#555;"></div>
<div class="t " style="left:1876px;top:1007.5px;font-size:14px;line-height:18px;color:#505050;">100%</div>
<div class="t " style="left:1444px;top:924.0px;font-size:26px;line-height:34px;color:rgba(95,95,95,0.45);">Windows 정품 인증</div>
<div class="t " style="left:1444px;top:956.5px;font-size:18.2px;line-height:24px;color:rgba(95,95,95,0.42);">[설정]으로 이동하여 Windows를 정품 인증합니다.</div>
<div class="b" style="left:0px;top:1023px;width:1920px;height:7px;background:#333856;"></div>
<div class="b" style="left:1579px;top:1023px;width:42px;height:6px;background:#474c69;"></div>
<div class="b" style="left:0px;top:1028px;width:1920px;height:1px;background:#252d3c;"></div>
<div class="b" style="left:0px;top:1029px;width:1920px;height:1px;background:#e2e2e4;"></div>
<div class="b" style="left:0px;top:1030px;width:1920px;height:50px;background:#090e16;"></div>
<div class="b" style="left:1914px;top:1030px;width:1px;height:50px;background:#555a63;"></div>
<div class="b" style="left:556px;top:1030px;width:61px;height:50px;background:#a25b20;"></div>
<div class="b" style="left:611px;top:1030px;width:1px;height:47px;background:#8a4c1a;"></div>
<div class="b" style="left:556px;top:1077px;width:61px;height:3px;background:#ff7f0e;"></div>
<div class="b" style="left:680px;top:1030px;width:61px;height:50px;background:#3f4447;"></div>
<div class="b" style="left:189px;top:1077px;width:51px;height:3px;background:#76b9ed;"></div>
<div class="b" style="left:251px;top:1077px;width:51px;height:3px;background:#76b9ed;"></div>
<div class="b" style="left:623px;top:1077px;width:40px;height:3px;background:#76b9ed;"></div>
<div class="b" style="left:664px;top:1077px;width:10px;height:3px;background:#5a97c9;"></div>
<div class="b" style="left:680px;top:1077px;width:61px;height:3px;background:#76b9ed;"></div>
<svg class="b" style="left:20px;top:1045px;" width="21" height="21" viewBox="0 0 21 21"><path d="M0 3 L8.7 1.8 V9.9 H0 Z M9.8 1.6 L20.5 0 V9.9 H9.8 Z M0 11 H8.7 V19.2 L0 18 Z M9.8 11 H20.5 V21 L9.8 19.4 Z" fill="#fff"/></svg>
<svg class="b" style="left:79px;top:1044px;" width="23" height="23" viewBox="0 0 23 23"><circle cx="14" cy="8.5" r="7" fill="none" stroke="#fff" stroke-width="1.6"/><path d="M9 13.5 L1 22" stroke="#fff" stroke-width="1.8"/></svg>
<svg class="b" style="left:139px;top:1045px;" width="22" height="20" viewBox="0 0 22 20"><rect x="1" y="4" width="13" height="12" fill="none" stroke="#fff" stroke-width="1.4"/><path d="M1 0.7 V3 M14 0.7 V3 M1 17 V19.5 M14 17 V19.5 M18.5 0.7 V6 M18.5 8.5 V11.5 M18.5 14 V19.5" stroke="#fff" stroke-width="1.4"/></svg>
<svg class="b" style="left:201px;top:1043px;" width="26" height="26" viewBox="0 0 26 26"><path d="M2 12 C3 4 9 1 14 1 C21 1 25 6 25 13 V15 H9.5 C10 19 13.5 20.5 17 20.5 C20 20.5 22.5 19.5 24 18.5 V23.5 C22 24.7 19 25.5 15.5 25.5 C8 25.5 3.5 21 3.5 15 C3.5 11 6 8 9 6.5 C6 7 3.5 9 2 12 Z M9.7 10.7 H18 C18 7.5 16.5 5.8 14 5.8 C11.5 5.8 10 8 9.7 10.7 Z" fill="#1e88e5" fill-rule="evenodd"/></svg>
<svg class="b" style="left:262px;top:1043px;" width="29" height="26" viewBox="0 0 29 26"><path d="M1 3 H10 L12 5.5 H27 V23 H1 Z" fill="#f5c64c"/><path d="M1 8 H27 V23 H1 Z" fill="#fbe08a"/><rect x="3" y="1.5" width="6" height="2" fill="#fff2c0"/><path d="M7 23 V15 H21 V23 H18 V18 H10 V23 Z" fill="#3b9be8"/></svg>
<svg class="b" style="left:323px;top:1041px;" width="30" height="29" viewBox="0 0 30 29"><path d="M9.5 9 V6.5 C9.5 0 20.5 0 20.5 6.5 V9" fill="none" stroke="#ddd" stroke-width="1.7"/><path d="M1 8.5 H29 V28 H1 Z" fill="#fff"/><rect x="9" y="12.5" width="5.5" height="5.5" fill="#f25022"/><rect x="15.5" y="12.5" width="5.5" height="5.5" fill="#7fba00"/><rect x="9" y="19" width="5.5" height="5.5" fill="#00a4ef"/><rect x="15.5" y="19" width="5.5" height="5.5" fill="#ffb900"/></svg>
<svg class="b" style="left:385px;top:1044px;" width="31" height="23" viewBox="0 0 31 23"><path d="M0.5 8 L15.5 0.5 L30.5 8 V22.5 H0.5 Z" fill="#fff"/><path d="M8 9.5 L27 9.5 L19 14.5 L23.5 21 Z" fill="#090e16"/></svg>
<svg class="b" style="left:446px;top:1040px;" width="32" height="32" viewBox="0 0 32 32"><path d="M5 16 C5 9 10 5 16 5 C23 5 27.5 10 27.5 17 V18.5 H11.5 C12 22 14.5 23.5 17.5 23.5 C20.5 23.5 22.5 22.3 23.5 20.5 H27 C25.5 25 21.5 27.5 17 27.5 C10 27.5 5 23 5 16 Z M11.6 14.5 H21.5 C21.3 11 19.5 9 16.5 9 C13.5 9 11.9 11.2 11.6 14.5 Z" fill="#37b6f0" fill-rule="evenodd"/><path d="M3.5 27 C-1 20 8 8 20 3.5 C26 1.3 30 2.5 29.5 6.5 C29.3 8 28.5 9.5 28 10.5 C28.5 7 27 4.5 22 6 C12 9 2.5 20 5 25.5 C6 27.5 9 27.5 11.5 26 C8.5 28.5 5 29 3.5 27 Z" fill="#f2c400"/></svg>
<svg class="b" style="left:508px;top:1040px;" width="33" height="30" viewBox="0 0 33 30"><path d="M16 6 C7 6 1 12 1 18.5 C1 24 6 27 11 26.5 C14 26.2 13 23 15.5 22 C18 21 21 24 25 21.5 C29 19 29.5 12 26 9 C23.5 7 20 6 16 6 Z" fill="#cfe0ee" stroke="#8aa0b2" stroke-width="0.8"/><circle cx="8" cy="14" r="2.3" fill="#e33"/><circle cx="13" cy="10.5" r="2.3" fill="#4a4"/><circle cx="19" cy="10" r="2.3" fill="#fc3"/><circle cx="7" cy="20" r="2.3" fill="#36c"/><path d="M27 1 L30 3 L17 26 L14.5 27 L15 24.5 Z" fill="#d88a3c"/><path d="M27 1 L30 3 L28 6.5 L25 4.5 Z" fill="#e8d8b0"/></svg>
<svg class="b" style="left:571px;top:1040px;" width="30" height="30" viewBox="0 0 30 30"><rect x="0" y="0" width="30" height="30" rx="2" fill="#fae100"/><path d="M15 7 C8.5 7 4 10.5 4 14.5 C4 17.5 6.3 19.8 9.5 21 L8.5 25 L13 22 C13.7 22.1 14.3 22.1 15 22.1 C21.5 22.1 26 18.7 26 14.5 C26 10.5 21.5 7 15 7 Z" fill="#3b1e1e"/><text x="15" y="17.3" font-size="6.3" font-weight="bold" fill="#fae100" text-anchor="middle" font-family="Liberation Sans">TALK</text></svg>
<svg class="b" style="left:633px;top:1040px;" width="30" height="30" viewBox="0 0 30 30"><path d="M10 3 L26 5 L24 27 L4 23 Z" fill="#eaf3f7" stroke="#9fb4bf" stroke-width="0.8"/><path d="M11 5.5 L24 7.2 L21 24 L7 21 Z" fill="#8cc0d0"/><path d="M7 21 L21 24 L22.5 14 C17 17 11 18.5 7 21 Z" fill="#4a8ea0"/><path d="M10 3 L26 5" stroke="#777" stroke-width="1.6" stroke-dasharray="1.3 1.1"/><path d="M26 5 L28 8 L25.5 28 L24 27 Z" fill="#c9a24a"/></svg>
<svg class="b" style="left:696px;top:1041px;" width="28" height="27" viewBox="0 0 28 27"><rect x="13" y="3.5" width="14" height="20" fill="#fff" stroke="#1d6f42" stroke-width="1.4"/><path d="M17 7 H25 M17 10.5 H25 M17 14 H25 M17 17.5 H25 M17 21 H25 M21.5 4 V23" stroke="#1d6f42" stroke-width="1.2"/><path d="M0 3 L16 0 V27 L0 24 Z" fill="#1d6f42"/><path d="M4.5 8.5 L11.5 18.5 M11.5 8.5 L4.5 18.5" stroke="#fff" stroke-width="2.2"/></svg>
<svg class="b" style="left:1574px;top:1044px;" width="22" height="22" viewBox="0 0 22 22"><circle cx="14.1" cy="4.8" r="3" fill="none" stroke="#fff" stroke-width="1.3"/><path d="M9.6 13 C9.8 7.5 18.4 7.5 18.8 13" fill="none" stroke="#fff" stroke-width="1.3"/><circle cx="6.3" cy="11.3" r="3" fill="#090e16" stroke="#fff" stroke-width="1.3"/><path d="M1.4 20 C1.6 14.3 11 14.3 11.3 20" fill="none" stroke="#fff" stroke-width="1.3"/></svg>
<svg class="b" style="left:1620px;top:1049px;" width="17" height="10" viewBox="0 0 17 10"><path d="M1 9 L8.5 1.5 L16 9" fill="none" stroke="#fff" stroke-width="1.5"/></svg>
<svg class="b" style="left:1648px;top:1046px;" width="22" height="15" viewBox="0 0 22 15"><path d="M5 14 C1 14 0.5 9 4 8.3 C4 4.5 9 3.5 10.5 6.3 C12 3 18 4 17.5 8.5 C22 8.5 22 14 18 14 Z" fill="#fff"/></svg>
<svg class="b" style="left:1680px;top:1044px;" width="19" height="19" viewBox="0 0 19 19"><path d="M2 18 C2 9 9 2 18 2 M6 18 C6 11.5 11.5 6 18 6 M10 18 C10 13.5 13.5 10 18 10" fill="none" stroke="#fff" stroke-width="1.3"/><circle cx="16.5" cy="16.5" r="1.8" fill="#fff"/></svg>
<svg class="b" style="left:1707px;top:1044px;" width="24" height="20" viewBox="0 0 24 20"><path d="M1 7 H4 L9 2.5 V17.5 L4 13 H1 Z" fill="none" stroke="#fff" stroke-width="1.3" stroke-linejoin="round"/><path d="M12 7 C13.5 8.5 13.5 11.5 12 13 M15 4.5 C18 7.5 18 12.5 15 15.5" fill="none" stroke="#fff" stroke-width="1.2"/><path d="M18.5 2.5 C22.5 6.5 22.5 13.5 18.5 17.5" fill="none" stroke="#888" stroke-width="1.2"/></svg>
<svg class="b" style="left:1738px;top:1045px;" width="20" height="20" viewBox="0 0 20 20"><circle cx="10" cy="10" r="9" fill="#8a8d92"/><path d="M6 6 L14 14 M14 6 L6 14" stroke="#090e16" stroke-width="2.2"/></svg>
<div class="t " style="left:1658.5px;width:300px;text-align:center;top:1033.5px;font-size:14.3px;line-height:19px;color:#fff;">오전 12:11</div>
<div class="t " style="left:1657.5px;width:300px;text-align:center;top:1056.5px;font-size:14.6px;line-height:19px;color:#fff;">2019-03-18</div>
<svg class="b" style="left:1869px;top:1044px;" width="32" height="32" viewBox="0 0 32 32"><path d="M1 1 H20 V15 H11 L7.5 18.5 V15 H1 Z" fill="#fff"/><path d="M4.5 4.8 H16.5 M4.5 8 H16.5 M4.5 11.2 H16.5" stroke="#090e16" stroke-width="1.2"/><circle cx="19.7" cy="20.7" r="9" fill="#2b2f35" stroke="#6f737a" stroke-width="1.2"/><text x="19.7" y="25.5" font-size="13.5" font-weight="bold" fill="#fff" text-anchor="middle" font-family="Liberation Sans">1</text></svg>
</body></html>
